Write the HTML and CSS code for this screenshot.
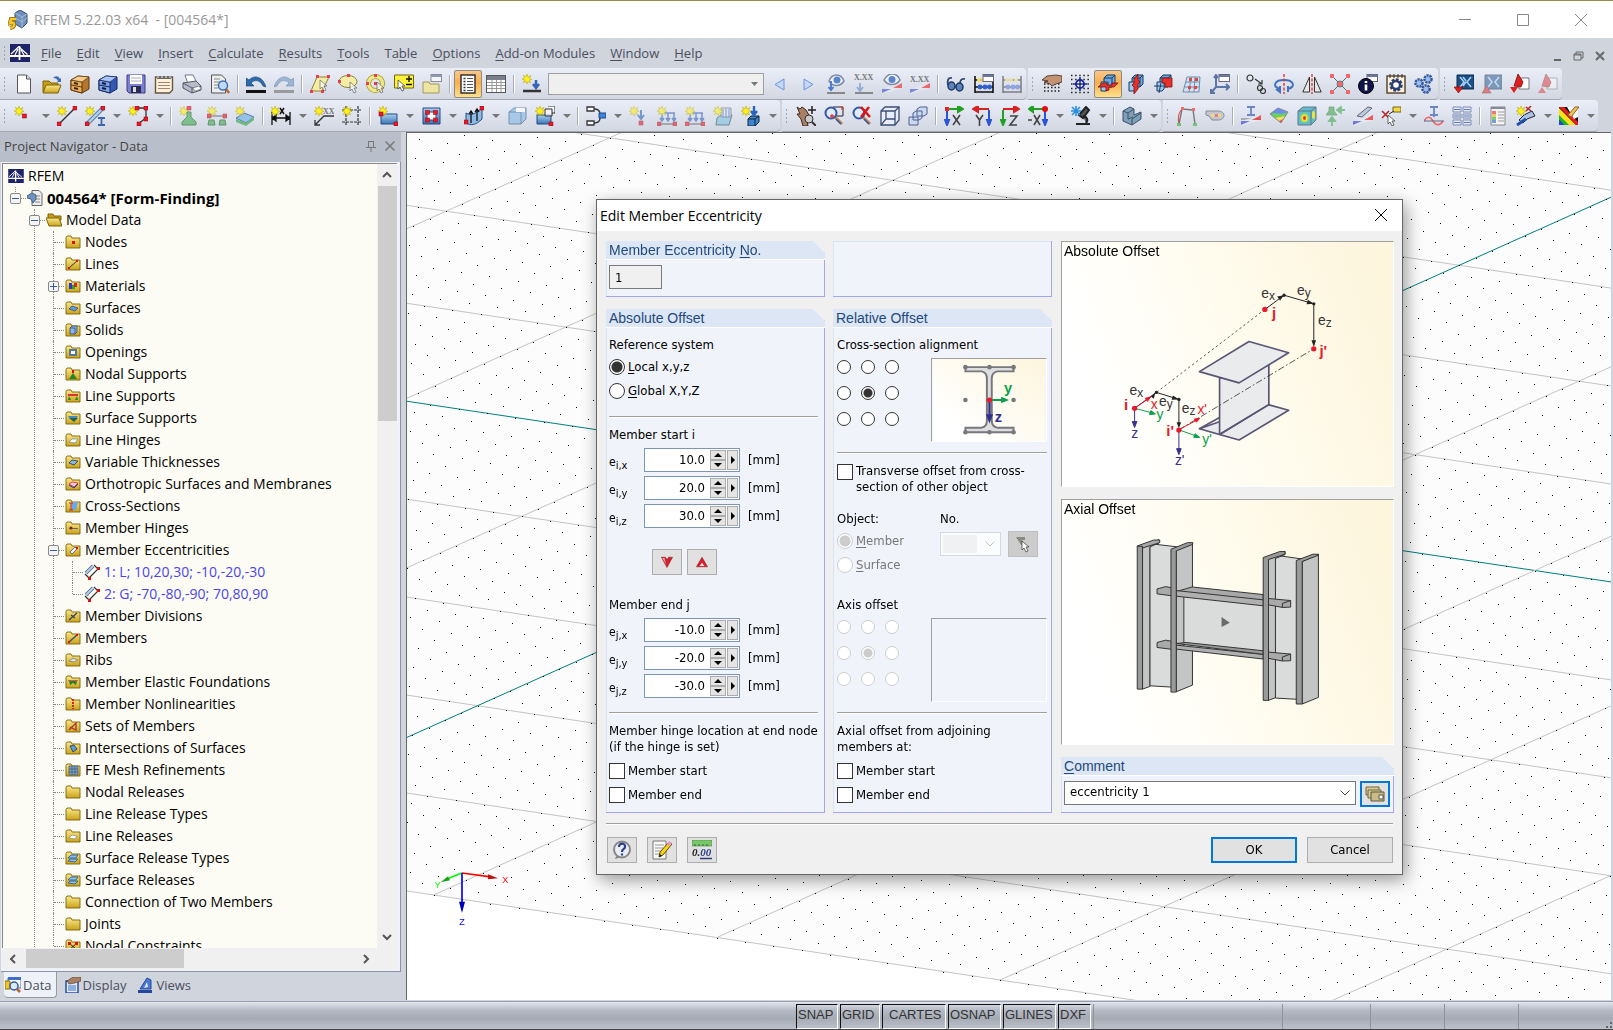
FILE: index.html
```html
<!DOCTYPE html>
<html lang="en">

<head>
    <meta charset="UTF-8">
    <meta name="viewport" content="width=device-width, initial-scale=1.0">
    <title>RFEM 5.22.03 x64 - [004564*]</title>
    <link rel="stylesheet" href="styles.css">
</head>

<body>
    <!-- Icon sprite, every icon is drawn on a 20x20 grid -->
    <svg class="sprite" aria-hidden="true">
        <defs>
            <linearGradient id="gold" x1="0" y1="0" x2="0" y2="1"><stop offset="0" stop-color="#fbe98a"/><stop offset="1" stop-color="#c9a21c"/></linearGradient>
            <linearGradient id="blue" x1="0" y1="0" x2="0" y2="1"><stop offset="0" stop-color="#a8cdf0"/><stop offset="1" stop-color="#3c74b4"/></linearGradient>
            <linearGradient id="cream" x1="0" y1="1" x2="1" y2="0"><stop offset="0.2" stop-color="#fff"/><stop offset="1" stop-color="#fdf5dc"/></linearGradient>
            <g id="star"><path d="M5 0 6 3.2 9 1.4 7.3 4.2 10 5.3 7.3 6.3 8.6 9 5.8 7.5 5 10 4 7.3 1.2 8.8 2.7 6 0 5 2.7 3.9 1.4 1.2 4 2.8z" fill="#fff01e" stroke="#b3a200" stroke-width=".5"/></g>
            <g id="node"><rect width="4" height="4" fill="#e8192c" stroke="#900" stroke-width=".5"/></g>
            <g id="cursor"><path d="M0 0v9l2-2 2 4 2-1-2-4h3z" fill="#fff" stroke="#444" stroke-width=".8"/></g>
            <g id="lens"><path d="M11 11l7 7" stroke="#c08a50" stroke-width="3"/><path d="M12 13l5 5" stroke="#3555a5" stroke-width="1.500"/><circle cx="7" cy="7" r="5.500" fill="#dceeff" fill-opacity=".8" stroke="#3555a5" stroke-width="2"/></g>
            <g id="abacus"><path d="M1 2v17M19 2v17M1 6h18M1 13h18M1 18h18" stroke="#111" stroke-width="1.600"/><g fill="#f0dc60"><circle cx="5" cy="6" r="2"/><circle cx="9" cy="6" r="2"/><circle cx="14" cy="6" r="2"/></g><g fill="#2f5fd0"><circle cx="6" cy="13" r="2.400"/><circle cx="11" cy="13" r="2.400"/><circle cx="15.500" cy="13" r="2.400"/></g></g>
            <g id="tri"><path d="M0 20V15L20 9v5z" fill="#e9eaf2"/><path d="M0 19l9-4H0z" fill="#5161e0"/><path d="M11 14h9V9z" fill="#ee3a3a"/></g>
            <g id="cubes"><path d="M6 4l3-3h8v9l-3 3H6z" fill="#6fa9dc" stroke="#153a66"/><path d="M6 4h8v9M14 4l3-3" fill="none" stroke="#153a66"/><path d="M3 8h7v7l-2 2H3z" fill="#9fcaee" stroke="#153a66"/></g>
            <g id="win"><rect x="9" y=".5" width="10.500" height="7" fill="#fff" stroke="#667"/><path d="M9 1h10.500v2H9z" fill="#6878a0"/></g>
        </defs>
        <symbol id="i-logo" viewBox="0 0 20 18"><path fill="#1d2467" d="M0 0h20v18H0z"/><path d="M0 12h20M9.500 2v14" stroke="#fff" stroke-width="1.800"/><path d="M9 2.500L1 10M9.500 3.500l8 7M8 5L5 11M11 6l3 5" stroke="#fff" stroke-width="1.200" fill="none"/></symbol>
        <symbol id="i-app" viewBox="0 0 20 20"><path d="M7 3l5-3 7 4v9l-5 5-7-4z" fill="#6f90ba" stroke="#344e72"/><path d="M7 3l7 4v11M14 7l5-3M7 8l7 4 5-4" fill="none" stroke="#b9d0e8" stroke-width=".7"/><path d="M8 9H3l-1 4c5-2 6 4 0 5" fill="none" stroke="#7c6410" stroke-width="4"/><path d="M8 9H3l-1 4c5-2 6 4 0 5" fill="none" stroke="#f5c72a" stroke-width="2.600"/></symbol>
        <symbol id="i-new" viewBox="0 0 20 20"><path d="M3.500 1h9l4 4v14h-13z" fill="#fdfdfd" stroke="#555"/><path d="M12.500 1v4h4" fill="#ddd" stroke="#555"/></symbol>
        <symbol id="i-open" viewBox="0 0 20 20"><path d="M1 7h6l2 2h7v9H1z" fill="#c79d18" stroke="#7d6208"/><path d="M4 11h15l-3 8H1z" fill="url(#gold)" stroke="#7d6208"/><path d="M11 4c3-3 6-2 7 1l1-1v4h-4l1-1c-1-2-2-3-5-3z" fill="#3f6fb5"/></symbol>
        <symbol id="i-cab" viewBox="0 0 20 20"><path d="M1 6l7-4 11 1v12l-7 4-11-3z" fill="#b5762c" stroke="#5d3708"/><path d="M1 6l11 2v11L1 16z" fill="#eab061" stroke="#5d3708"/><path d="M1 6l7-4 11 1-7 5z" fill="#f6cd92" stroke="#5d3708" stroke-width=".7"/><path d="M1 11l11 2" stroke="#5d3708"/><path d="M4 9l4 1M4 14l4 1" stroke="#40280a" stroke-width="2"/></symbol>
        <symbol id="i-cabb" viewBox="0 0 20 20"><path d="M1 6l7-4 11 1v12l-7 4-11-3z" fill="#3258b4" stroke="#13275c"/><path d="M1 6l11 2v11L1 16z" fill="#7fa3ea" stroke="#13275c"/><path d="M1 6l7-4 11 1-7 5z" fill="#aac4f8" stroke="#13275c" stroke-width=".7"/><path d="M1 11l11 2" stroke="#13275c"/><path d="M4 9l4 1M4 14l4 1" stroke="#0f1c40" stroke-width="2"/></symbol>
        <symbol id="i-save" viewBox="0 0 20 20"><path d="M1 1h18v18H3l-2-2z" fill="#7d7fd0" stroke="#3c3d80"/><path d="M4 1h12v9H4z" fill="#fff"/><path d="M5 4h10M5 7h10" stroke="#aab"/><path d="M5 12h10v7H5z" fill="#2a2b50"/><path d="M7 13h3v5H7z" fill="#ddd"/></symbol>
        <symbol id="i-clip" viewBox="0 0 20 20"><path d="M1.500 3h17v13l-3 3h-14z" fill="#fdf0dc" stroke="#6b543a" stroke-width="1.400"/><path d="M3 2h14v3H3z" fill="#6d6a66"/><path d="M4 0v4M8 0v4M12 0v4M16 0v4" stroke="#eee"/><path d="M4 8.500h12M4 11.500h12M4 14.500h12" stroke="#a4876a" stroke-width="1.200"/></symbol>
        <symbol id="i-print" viewBox="0 0 20 20"><path d="M3 1h8l4 8-9 1z" fill="#fff" stroke="#778"/><path d="M1 9l13-2 5 5v4l-9 3-9-5z" fill="#b9bccb" stroke="#556"/><path d="M1 9l9 5 9-2M10 14v5" fill="none" stroke="#556"/><path d="M11 14l6-2 2 3-6 2z" fill="#fff" stroke="#778" stroke-width=".6"/></symbol>
        <symbol id="i-preview" viewBox="0 0 20 20"><path d="M1.500 1h10l4 4v14h-14z" fill="#eee" stroke="#555"/><path d="M4 5h6M4 8h9M4 11h6M4 14h4" stroke="#888"/><path d="M16 15l3 4" stroke="#b7672e" stroke-width="2.500"/><circle cx="13" cy="11.500" r="4.500" fill="#bedcf6" stroke="#4070b8" stroke-width="1.500"/></symbol>
        <symbol id="i-undo" viewBox="0 0 20 20"><path d="M0 4v8h8L5 9c4-4 9-3 12 3l3 1C17 3 9 0 3 6z" fill="#2d69ad" stroke="#123a66" stroke-width=".6"/><path d="M0 17.500h20" stroke="#111" stroke-width="3"/></symbol>
        <symbol id="i-redo" viewBox="0 0 20 20"><path d="M20 4v8h-8l3-3c-4-4-9-3-12 3l-3 1C3 3 11 0 17 6z" fill="#9bb5d2" stroke="#7b8ea6" stroke-width=".6"/><path d="M0 17.500h20" stroke="#999" stroke-width="3"/></symbol>
        <symbol id="i-selpar" viewBox="0 0 20 20"><path d="M7 3h12l-7 14H1z" fill="#f3eda6" stroke="#8d8033"/><g fill="#e8404a"><path d="M6 1h3v3H6zM17 1h3v3h-3zM0 16h3v3H0zM11 16h3v3h-3z"/></g><use href="#cursor" x="10" y="6" opacity=".7"/></symbol>
        <symbol id="i-seloval" viewBox="0 0 20 20"><ellipse cx="10" cy="7.500" rx="9" ry="6" fill="#f3eda6" stroke="#8d8033"/><path d="M9 0h3v3H9zM0 6h3v3H0z" fill="#e8404a"/><use href="#cursor" x="12" y="8" opacity=".7"/></symbol>
        <symbol id="i-selring" viewBox="0 0 20 20"><circle cx="9.500" cy="9.500" r="7" fill="none" stroke="#a3992f" stroke-width="5"/><circle cx="9.500" cy="9.500" r="7" fill="none" stroke="#efe886" stroke-width="3.400"/><path d="M8 0h3v3H8zM0 8h3v3H0zM8 8h3v3H8z" fill="#e8404a"/><use href="#cursor" x="11" y="8" opacity=".7"/></symbol>
        <symbol id="i-selbox" viewBox="0 0 20 20"><path d="M.500 1h19v13H.500z" fill="#fdf13c" stroke="#6f6710"/><path d="M12 5h6M15 2v6M12 10.500h6" stroke="#111" stroke-width="1.400"/><use href="#cursor" x="4" y="6"/></symbol>
        <symbol id="i-selwin" viewBox="0 0 20 20"><path d="M1 8h6l1 2h9v9H1z" fill="#ece5a3" stroke="#a39a5a"/><use href="#win" opacity=".7"/></symbol>
        <symbol id="i-list" viewBox="0 0 20 20"><rect x="3" y="1" width="14" height="18" fill="#fff" stroke="#333" stroke-width="1.500"/><path d="M5.500 4.500h2M5.500 7.500h2M5.500 10.500h2M5.500 13.500h2M5.500 16.500h2" stroke="#333" stroke-width="1.600"/><path d="M9 4.500h6M9 7.500h6M9 10.500h6M9 13.500h6M9 16.500h6" stroke="#555"/></symbol>
        <symbol id="i-table" viewBox="0 0 20 20"><rect x=".500" y="1.500" width="19" height="17" fill="#fff" stroke="#555"/><path d="M1 2h18v4H1z" fill="#7a8090"/><path d="M1 8.500h18M1 11.500h18M1 14.500h18M6 6v12M10.500 6v12M15 6v12" stroke="#999"/></symbol>
        <symbol id="i-load" viewBox="0 0 20 20"><use href="#star"/><path d="M14 6v7M11 10l3 4 3-4" fill="none" stroke="#3565b8" stroke-width="2.500"/><path d="M1 17h18" stroke="#333" stroke-width="2.500"/></symbol>
        <symbol id="i-prev" viewBox="0 0 20 20"><path d="M14 5v11L5 10.500z" fill="#c4d8f6" stroke="#6c93dd"/></symbol>
        <symbol id="i-next" viewBox="0 0 20 20"><path d="M6 5v11l9-5.500z" fill="#c4d8f6" stroke="#6c93dd"/></symbol>
        <symbol id="i-eyeload" viewBox="0 0 20 20"><path d="M3 7c3-8 12-8 15 0-4 6-11 6-15 0z" fill="#eef3fb" stroke="#7c8aa4" stroke-width="1.500"/><circle cx="11" cy="6" r="3.500" fill="#5a85c8"/><path d="M5 7v9M2.500 13l2.500 3 2.500-3" stroke="#4a78c8" stroke-width="1.800" fill="none"/><path d="M1 19h18" stroke="#888" stroke-width="2"/></symbol>
        <symbol id="i-xxload" viewBox="0 0 20 20"><text x="0" y="6" class="ico-txt">X.XX</text><path d="M6 9v7M3 13l3 4 3-4" stroke="#8fa8d4" stroke-width="1.800" fill="none"/><path d="M1 19h18" stroke="#888" stroke-width="2"/></symbol>
        <symbol id="i-eyeres" viewBox="0 0 20 20"><path d="M2 6c4-8 13-8 16 0-4 6-12 6-16 0z" fill="#eef3fb" stroke="#7c8aa4" stroke-width="1.500"/><circle cx="10" cy="5.500" r="3.500" fill="#5a85c8"/><use href="#tri" opacity=".7"/></symbol>
        <symbol id="i-xxres" viewBox="0 0 20 20"><text x="0" y="8" class="ico-txt">X.XX</text><use href="#tri" opacity=".7"/></symbol>
        <symbol id="i-glasses" viewBox="0 0 20 20"><path d="M6 4C2 3 1 7 2 11M19 5c-4-1-5 2-5 5M8 12l3 1" fill="none" stroke="#2d456e" stroke-width="1.800"/><ellipse cx="5.500" cy="12" rx="3.500" ry="4" fill="#5b83c3" stroke="#23395f" stroke-width="1.500"/><ellipse cx="13.500" cy="13" rx="3.500" ry="4" fill="#5b83c3" stroke="#23395f" stroke-width="1.500"/></symbol>
        <symbol id="i-calcwin" viewBox="0 0 20 20"><use href="#abacus"/><use href="#win"/></symbol>
        <symbol id="i-calc" viewBox="0 0 20 20"><use href="#abacus" opacity=".45"/></symbol>
        <symbol id="i-handgrid" viewBox="0 0 20 20"><path d="M2 10h17M2 13.500h17M2 17h17" stroke="#222" stroke-width="1.500" stroke-dasharray="1.500 2"/><path d="M0 6l5-4 9-1 6 1v6l-6 2-4 2-2-2-3-1-3-1 4-1z" fill="#c29373" stroke="#3e2718" stroke-width=".8"/></symbol>
        <symbol id="i-snap" viewBox="0 0 20 20"><path d="M1 1.500h18M1 5.500h18M1 14.500h18M1 18.500h18M1 10h18" stroke="#222" stroke-width="1.500" stroke-dasharray="1.500 2.600"/><circle cx="10" cy="10" r="4" fill="#fff" stroke="#1a2690" stroke-width="1.800"/><path d="M10 3v14M3 10h14" stroke="#1a2690" stroke-width="1.500"/></symbol>
        <symbol id="i-pl1" viewBox="0 0 20 20"><use href="#cubes"/><path d="M0 13l5-4h4v2h5V9h6l-4 4h-5v3l-3 1v-4z" fill="#e8302c" stroke="#711" stroke-width=".8"/></symbol>
        <symbol id="i-pl2" viewBox="0 0 20 20"><use href="#cubes"/><path d="M8 5l4-5v6l2 2-2 2v5l-4 5v-7l-2-2 2-2z" fill="#e8302c" stroke="#711" stroke-width=".8"/></symbol>
        <symbol id="i-pl3" viewBox="0 0 20 20"><use href="#cubes"/><path d="M8 4h10v9h-7V9H8z" fill="#e8302c" stroke="#711" stroke-width=".8"/><path d="M0 12h9M7 9l-2 10" stroke="#153a66"/></symbol>
        <symbol id="i-plgrid" viewBox="0 0 20 20"><path d="M5 3h13l-1 15H1z" fill="#cfe4f6" stroke="#6e8cab"/><path d="M4 8h14M3 13h14M9 3L7 18M13 3l-1 15" stroke="#6e8cab"/><path d="M7 4h3v3H7zM13 4h3v3h-3zM6 12h3v3H6zM12 12h3v3h-3z" fill="#ea4040"/></symbol>
        <symbol id="i-ucs" viewBox="0 0 20 20"><path d="M6 1v12h13M6 13l-5 6M4 4l2-3 2 3M1 15v4h4M16 10l3 3-3 3" fill="none" stroke="#5b75a8" stroke-width="2"/><use href="#win"/></symbol>
        <symbol id="i-move" viewBox="0 0 20 20"><circle cx="4" cy="4" r="3" fill="none" stroke="#333" stroke-width="1.200"/><circle cx="14" cy="14" r="2.500" fill="none" stroke="#333" stroke-width="1.200"/><circle cx="17" cy="17" r="2.500" fill="none" stroke="#333" stroke-width="1.200"/><path d="M9 5l7 5M16 6v4h-4" fill="none" stroke="#333" stroke-width="1.200"/></symbol>
        <symbol id="i-rotate" viewBox="0 0 20 20"><path d="M6 15C-2 13 0 6 10 6s12 7 4 9M6 12v6l-4-3M14 12v6" fill="none" stroke="#3f73bd" stroke-width="2"/><path d="M10 0v20" stroke="#e33" stroke-width="1.400" stroke-dasharray="3 1.500"/></symbol>
        <symbol id="i-mirror" viewBox="0 0 20 20"><path d="M7.500 3v15H.800zM12.500 3v15h6.700z" fill="#e9e9e9" stroke="#333"/><path d="M10 0v20" stroke="#e33" stroke-width="1.400" stroke-dasharray="3 1.500"/></symbol>
        <symbol id="i-scale" viewBox="0 0 20 20"><path d="M2 2l16 16M18 2L2 18" stroke="#666"/><circle cx="10" cy="10" r="3" fill="none" stroke="#666"/><g fill="#ee6a6a"><path d="M0 0h4v4H0zM16 0h4v4h-4zM0 16h4v4H0zM16 16h4v4h-4zM8 8h4v4H8z"/></g></symbol>
        <symbol id="i-info" viewBox="0 0 20 20"><use href="#win"/><circle cx="8" cy="12" r="7.500" fill="#10144a" stroke="#000"/><path d="M8 10.500v6M8 7v2" stroke="#fff" stroke-width="2.600"/></symbol>
        <symbol id="i-gearclip" viewBox="0 0 20 20"><rect x="1" y="2" width="18" height="17" fill="#fbf0dc" stroke="#5b4a33" stroke-width="1.500"/><path d="M4 0v4M8 0v4M12 0v4M16 0v4" stroke="#333"/><circle cx="10" cy="11" r="5" fill="none" stroke="#2a4070" stroke-width="3.500" stroke-dasharray="2.500 1.300"/><circle cx="10" cy="11" r="4" fill="#fff" stroke="#2a4070" stroke-width="2.400"/></symbol>
        <symbol id="i-gears" viewBox="0 0 20 20"><g fill="#9fbdea" stroke="#33569c" stroke-width="2.400" stroke-dasharray="2.200 .8"><circle cx="14" cy="5" r="3.600"/><circle cx="5" cy="9" r="3.600"/><circle cx="12" cy="15" r="3.600"/></g></symbol>
        <symbol id="i-mod" viewBox="0 0 20 20"><path d="M3 1h17v14H3z" fill="#1d4f86" stroke="#0c2b50"/><path d="M6 3l4 5-4 5M17 3l-4 5 4 5M9 3l3 4M9 12l3-4" stroke="#a9d3f4" stroke-width="1.500" fill="none"/><path d="M0 13h9l-4.500 6z" fill="#e01e1e" stroke="#7a0000" stroke-width=".6"/></symbol>
        <symbol id="i-modup" viewBox="0 0 20 20"><g opacity=".5"><path d="M3 1h17v14H3z" fill="#1d4f86" stroke="#0c2b50"/><path d="M6 3l4 5-4 5M17 3l-4 5 4 5" stroke="#a9d3f4" stroke-width="1.500" fill="none"/><path d="M0 19h9l-4.500-7z" fill="#e01e1e" stroke="#7a0000" stroke-width=".6"/></g></symbol>
        <symbol id="i-exp" viewBox="0 0 20 20"><path d="M9 4h10v11H9z" fill="#fff" stroke="#777"/><path d="M8 0l5 8-2 5-7-1z" fill="#e01e1e" stroke="#6a0000" stroke-width=".7"/><path d="M0 13h8l-4 6z" fill="#e01e1e"/></symbol>
        <symbol id="i-expup" viewBox="0 0 20 20"><g opacity=".45"><path d="M9 4h10v11H9z" fill="#fff" stroke="#777"/><path d="M8 0l5 8-2 5-7-1z" fill="#e01e1e" stroke="#6a0000" stroke-width=".7"/><path d="M0 19h8l-4-6z" fill="#e01e1e"/></g></symbol>

        <symbol id="i-nnode" viewBox="0 0 20 20"><use href="#star"/><use href="#node" x="8.500" y="8"/></symbol>
        <symbol id="i-nline" viewBox="0 0 20 20"><path d="M2 18L18 2" stroke="#333" stroke-width="1.400"/><use href="#star"/><use href="#node" x="16" y="0"/><use href="#node" x="0" y="16"/></symbol>
        <symbol id="i-nmember" viewBox="0 0 20 20"><path d="M2 18L18 2" stroke="#46648c" stroke-width="4"/><path d="M2 18L18 2" stroke="#a9cdee" stroke-width="2.500"/><use href="#star"/><use href="#node" x="16" y="0"/><use href="#node" x="0" y="16"/><path d="M13 12h7M13 19h7M16.500 12v7" stroke="#3a65b0" stroke-width="1.800"/></symbol>
        <symbol id="i-npoly" viewBox="0 0 20 20"><path d="M8 2h10v10l-8 6" fill="none" stroke="#333" stroke-width="1.300"/><use href="#star"/><use href="#node" x="7" y="0"/><use href="#node" x="16" y="0"/><use href="#node" x="16" y="11"/><use href="#node" x="9" y="16"/></symbol>
        <symbol id="i-nsup" viewBox="0 0 20 20"><g opacity=".65"><use href="#star"/><use href="#node" x="8" y="0"/><path d="M8 6h4v5l5 5v3H3v-3l5-5z" fill="#4fae5c" stroke="#21702e"/></g></symbol>
        <symbol id="i-lsup" viewBox="0 0 20 20"><g opacity=".65"><path d="M2 10h16" stroke="#333"/><use href="#star"/><use href="#node" x="0" y="8"/><use href="#node" x="16" y="8"/><path d="M2 14h5l1 5H1zM13 14h5l1 5h-7z" fill="#4fae5c" stroke="#21702e"/></g></symbol>
        <symbol id="i-ssup" viewBox="0 0 20 20"><g opacity=".75"><path d="M1 12l8-5 10 4-8 6z" fill="#7db8e8" stroke="#2a5d90"/><path d="M1 13v3l10 4 8-6v-3l-8 6z" fill="#4fae5c"/><use href="#star"/></g></symbol>
        <symbol id="i-dim" viewBox="0 0 20 20"><path d="M1 6v13M19 6v13M2 12h16M5 9l-4 3 4 3zM15 9l4 3-4 3z" stroke="#111" fill="#111" stroke-width="1.300"/><path d="M9 2l4 6M13 2L9 8" stroke="#111" stroke-width="1.500"/><use href="#star" x="-1"/></symbol>
        <symbol id="i-cmt" viewBox="0 0 20 20"><path d="M1 19l9-9h10M1 14v5h5" fill="none" stroke="#333" stroke-width="1.300"/><text x="9" y="8" class="ico-txt">XX</text><use href="#star"/></symbol>
        <symbol id="i-guide" viewBox="0 0 20 20"><path d="M4 0v20M16 0v20M0 4h20M0 16h20" stroke="#333" stroke-width="1.200" stroke-dasharray="3 1"/><use href="#star"/></symbol>
        <symbol id="i-nsurf" viewBox="0 0 20 20"><path d="M3 8h16v10H3z" fill="url(#blue)" stroke="#204d80"/><use href="#star"/><use href="#node" x="1" y="6"/><use href="#node" x="16" y="16"/></symbol>
        <symbol id="i-nopen" viewBox="0 0 20 20"><path d="M2 2h17v16H2z" fill="url(#blue)" stroke="#204d80"/><path d="M6 6h9v8H6z" fill="#fff" stroke="#204d80"/><use href="#node" x="4.500" y="4.500"/><use href="#node" x="12.500" y="4.500"/><use href="#node" x="4.500" y="12"/><use href="#node" x="12.500" y="12"/></symbol>
        <symbol id="i-curved" viewBox="0 0 20 20"><path d="M2 7c5 3 9 1 16-5v11c-6 6-11 7-16 4z" fill="#8dbbe6" stroke="#204d80"/><path d="M7 6v11M5 8l2-3 2 3M13 3v12M11 6l2-3 2 3" stroke="#111" fill="none" stroke-width="1.300"/><use href="#node" x="0" y="14"/><use href="#node" x="16" y="0"/></symbol>
        <symbol id="i-solid" viewBox="0 0 20 20"><g opacity=".65"><path d="M2 6l5-4h12v11l-5 5H2z" fill="#8dbbe6" stroke="#3d668f"/><path d="M2 6h12v12M14 6l5-4" fill="none" stroke="#3d668f"/><path d="M9 2h9v4H9z" fill="#fff"/></g></symbol>
        <symbol id="i-extr" viewBox="0 0 20 20"><path d="M2 9h14v9H2z" fill="url(#blue)" stroke="#204d80"/><path d="M10 3h7v7h-7zM13 0h7v7h-3" fill="#fff" fill-opacity=".6" stroke="#333"/><use href="#star"/><use href="#node" x="14" y="16"/></symbol>
        <symbol id="i-conn" viewBox="0 0 20 20"><path d="M1 1h7v4H1zM1 15h7v4H1z" fill="#fff" stroke="#333" stroke-width="1.300"/><path d="M8 3c5 0 6 2 6 5M8 17c5 0 6-2 6-5" fill="none" stroke="#333" stroke-width="1.400"/><path d="M13 7h7v5h-7z" fill="#3d83dc" stroke="#1c4b8c"/></symbol>
        <symbol id="i-nload" viewBox="0 0 20 20"><g opacity=".6"><use href="#star"/><path d="M12 4v8M9 9l3 4 3-4" stroke="#3565b8" stroke-width="2" fill="none"/><use href="#node" x="10" y="15"/></g></symbol>
        <symbol id="i-mload" viewBox="0 0 20 20"><g opacity=".6"><path d="M3 7h15M5 7v8M11 7v8M17 7v8M3 12l2 3 2-3M9 12l2 3 2-3M15 12l2 3 2-3" stroke="#3565b8" stroke-width="1.500" fill="none"/><path d="M2 18h16" stroke="#333"/><use href="#star"/><use href="#node" x="0" y="16"/><use href="#node" x="16" y="16"/></g></symbol>
        <symbol id="i-sload" viewBox="0 0 20 20"><g opacity=".6"><path d="M4 12l4-3h11l-3 10H3z" fill="#7cc4dc" stroke="#356"/><path d="M8 2h10v9H8z" fill="#dde7f8" stroke="#667"/><path d="M10 3v8M13 3v8M16 3v8" stroke="#3565b8"/><use href="#star"/></g></symbol>
        <symbol id="i-soload" viewBox="0 0 20 20"><path d="M7 13l3-3h8v6l-4 4H7z" fill="#3e86cf" stroke="#123"/><path d="M7 13h7v7M14 13l4-3" fill="none" stroke="#123"/><path d="M13 0v7M10 5l3 4 3-4" stroke="#2a62c0" stroke-width="2.400" fill="none"/><use href="#star"/></symbol>
        <symbol id="i-pan" viewBox="0 0 20 20"><path d="M1 1l3 2 2-2 4 3 3 5-2 6 1 5H7l-2-7-4-5 3 0z" fill="#a98064" stroke="#3e291b"/><path d="M16 0v8M12 4h8" stroke="#222" stroke-width="1.500"/><circle cx="13" cy="13" r="4" fill="#ccc" stroke="#333"/><path d="M16 16l4 4" stroke="#333" stroke-width="2"/></symbol>
        <symbol id="i-zwin" viewBox="0 0 20 20"><path d="M9 1h10v9h-8" fill="none" stroke="#222"/><use href="#lens"/><path d="M18 0v4M8 8v4M6 10h4" stroke="#e33" stroke-width="1.300"/></symbol>
        <symbol id="i-zx" viewBox="0 0 20 20"><use href="#lens"/><path d="M9 1l9 10M17 1L9 11" stroke="#d81818" stroke-width="2.600"/></symbol>
        <symbol id="i-cube" viewBox="0 0 20 20"><path d="M1 5l4-4h14v13l-4 5H1z" fill="#e9eefb" stroke="#3d4f74" stroke-width="1.300"/><path d="M1 5h14v14M15 5l4-4M1 19l5-6V5M6 13h9" fill="none" stroke="#3d4f74" stroke-width="1.300"/></symbol>
        <symbol id="i-cubes" viewBox="0 0 20 20"><path d="M9 3l3-2h7v7l-3 2H9zM5 7l3-2h6v7l-3 2H5zM1 11h9v8H1z" fill="#cdd9f2" stroke="#4d628f"/></symbol>
        <symbol id="i-vx" viewBox="0 0 20 20"><path d="M3 3h12M14 0l5 3-5 3z" stroke="#22a022" fill="#22a022" stroke-width="2"/><path d="M3 4v12M1 14l2 5 2-5z" stroke="#2a55d8" fill="#2a55d8" stroke-width="2"/><path d="M1 1h4v4H1z" fill="#e22"/><path d="M9 9l7 10M16 9L9 19" stroke="#444" stroke-width="1.600"/></symbol>
        <symbol id="i-vy" viewBox="0 0 20 20"><path d="M17 3H5M6 0L1 3l5 3z" stroke="#d82222" fill="#d82222" stroke-width="2"/><path d="M17 4v12M15 14l2 5 2-5z" stroke="#2a55d8" fill="#2a55d8" stroke-width="2"/><path d="M4 9l3.500 5L11 9M7.500 14v6" stroke="#444" stroke-width="1.600" fill="none"/></symbol>
        <symbol id="i-vz" viewBox="0 0 20 20"><path d="M3 3h12M14 0l5 3-5 3z" stroke="#d82222" fill="#d82222" stroke-width="2"/><path d="M3 4v12M1 14l2 5 2-5z" stroke="#22a022" fill="#22a022" stroke-width="2"/><path d="M10 10h7l-7 9h7" stroke="#444" stroke-width="1.600" fill="none"/></symbol>
        <symbol id="i-vmx" viewBox="0 0 20 20"><path d="M15 3H5M5 0L1 3l4 3z" stroke="#22a022" fill="#22a022" stroke-width="2"/><path d="M17 4v12M15 14l2 5 2-5z" stroke="#2a55d8" fill="#2a55d8" stroke-width="2"/><circle cx="17" cy="3" r="3" fill="#d11"/><path d="M0 14h4M6 9l6 10M12 9L6 19" stroke="#444" stroke-width="1.600"/></symbol>
        <symbol id="i-micro" viewBox="0 0 20 20"><path d="M8 9l7-8 3 3-6 8zM12 10c5 1 5 5 3 7M5 18h14" stroke="#222" stroke-width="2" fill="#555"/><path d="M1 1l8 8M9 1L1 9M5 0v10M0 5h10" stroke="#2b90e0" stroke-width="1.600"/></symbol>
        <symbol id="i-lsolid" viewBox="0 0 20 20"><path d="M1 5l7-4 4 2v6l7-3v7l-9 6-9-4z" fill="#7f9fb9" stroke="#3a5166"/><path d="M1 5l5 2v6l5-2M6 7l6-4M10 19v-6l9-6" fill="none" stroke="#3a5166"/></symbol>
        <symbol id="i-frame" viewBox="0 0 20 20"><path d="M2 18L5 3l11 1 2 14" fill="none" stroke="#777" stroke-width="1.400"/><path d="M2 18C0 10 3 5 5 3" fill="none" stroke="#e33"/><path d="M4 1h3v3H4zM15 2h3v3h-3z" fill="#f06a6a"/><path d="M0 17h4v3H0zM16 17h4v3h-4z" fill="#6fc47a"/></symbol>
        <symbol id="i-cap" viewBox="0 0 20 20"><g opacity=".7"><path d="M1 5h12c8 0 8 9 0 9H7L4 10 1 9z" fill="#b9bcc4" stroke="#666"/><path d="M6 8h3v3H6zM13 8h3v3h-3z" fill="#f6d850"/><path d="M10 8h3v3h-3z" fill="#e55"/></g></symbol>
        <symbol id="i-iforce" viewBox="0 0 20 20"><path d="M6 1h8M6 9h8M10 1v8" stroke="#6b86c8" stroke-width="1.800"/><path d="M0 13h20" stroke="#777"/><use href="#tri" opacity=".8"/></symbol>
        <symbol id="i-surf" viewBox="0 0 20 20"><path d="M1 8l8-6 10 4-7 11z" fill="#6ad05e"/><path d="M1 8l8-6 10 4-6 2-8-1z" fill="#6a8ff0"/><path d="M6 12l10-2-3 6-1 1z" fill="#f5e05a"/><path d="M10 15l4-2-2 4z" fill="#e55"/><path d="M1 8l8-6 10 4-7 11z" fill="none" stroke="#889"/></symbol>
        <symbol id="i-solres" viewBox="0 0 20 20"><path d="M1 5l5-4h13v13l-5 5H1z" fill="#5fbccd" stroke="#678"/><path d="M1 5h13v14M14 5l5-4" fill="none" stroke="#678"/><ellipse cx="7.500" cy="12" rx="4.500" ry="5" fill="#8cdc6a"/><ellipse cx="7.500" cy="12" rx="3" ry="3.500" fill="#f5e23a"/><ellipse cx="7.500" cy="12" rx="1.500" ry="2" fill="#e33"/><ellipse cx="16.500" cy="9" rx="1.500" ry="4" fill="#f5e23a"/></symbol>
        <symbol id="i-react" viewBox="0 0 20 20"><g opacity=".65"><path d="M4 1h5v4l3 4H1l3-4z" fill="#4fae5c" stroke="#21702e" stroke-width=".6"/><path d="M20 4h-5M16 1l-4 3 4 3zM7 20v-5M4 15l3-4 3 4z" stroke="#4fae5c" fill="#4fae5c" stroke-width="1.800"/></g></symbol>
        <symbol id="i-stress" viewBox="0 0 20 20"><path d="M4 10l11-9 4 1-10 9z" fill="#b9cbe0" stroke="#667"/><use href="#tri" opacity=".8"/></symbol>
        <symbol id="i-resval" viewBox="0 0 20 20"><path d="M12 1h8v5h-8z" fill="#f4d94a" stroke="#776610"/><path d="M1 5l7 7M8 5l-7 7" stroke="#b22" stroke-width="1.500"/><path d="M8 8l5-3" stroke="#333"/><use href="#cursor" x="7" y="9"/></symbol>
        <symbol id="i-section" viewBox="0 0 20 20"><path d="M6 1h8M6 9h8M10 1v10" stroke="#6b86c8" stroke-width="1.800"/><path d="M0 15c3-5 6-5 9 0s7 5 10 0" fill="none" stroke="#e66" stroke-width="1.500"/><path d="M0 15h20" stroke="#668"/></symbol>
        <symbol id="i-resgrid" viewBox="0 0 20 20"><g fill="#e6ebf7" stroke="#7d8bb0"><path d="M1 1h8v5H1zM11 1h8v5h-8zM1 8h8v4H1zM11 8h8v4h-8zM1 14h8v5H1zM11 14h8v5h-8z"/></g><path d="M2 3.500h6M12 3.500h6M2 10h6M12 10h6M2 16.500h6M12 16.500h6" stroke="#5a78c0"/></symbol>
        <symbol id="i-panel" viewBox="0 0 20 20"><path d="M3 1h14v18H3z" fill="#f5f5f5" stroke="#888"/><path d="M3 1h14v2H3z" fill="#889"/><path d="M4 5h4v3H4z" fill="#e77"/><path d="M4 8h4v3H4z" fill="#ec6"/><path d="M4 11h4v3H4z" fill="#7c7"/><path d="M4 14h4v3H4z" fill="#79d"/><path d="M10 6h6M10 9h6M10 12h6M10 15h6" stroke="#999"/></symbol>
        <symbol id="i-knife" viewBox="0 0 20 20"><path d="M3 14l5-5 8-4 3 5-8 3-4 4z" fill="#aac4e6" stroke="#223"/><path d="M1 19l9-6" stroke="#1f4fae" stroke-width="3"/><path d="M10 1l5 4M15 0l-5 5" stroke="#b22" stroke-width="1.500"/><use href="#star"/></symbol>
        <symbol id="i-color" viewBox="0 0 20 20"><path d="M0 1h19v18H0z" fill="#111"/><path d="M0 2l17 17H9L0 10z" fill="#ffe11a"/><path d="M0 1h5l14 15v3h-2z" fill="#e02020"/><path d="M0 9l10 10H5L0 14z" fill="#19b32d"/><path d="M0 14l5 5H0z" fill="#2448d8"/><path d="M8 1h11v10l-4 2z" fill="#fff"/><path d="M20 1l-8 10-3-2 7-8z" fill="#e9c65a" stroke="#975b1e"/></symbol>

        <symbol id="i-folder" viewBox="0 0 16 14"><path d="M1 2.500l1-1.500h4l1 2h8v10H1z" fill="url(#gold)" stroke="#7d6208" stroke-width=".9"/></symbol>
        <symbol id="i-fopen" viewBox="0 0 16 14"><path d="M2 1h5l1 2h7v4H2z" fill="#c79d18" stroke="#7d6208"/><path d="M0 5h13l3 8H3z" fill="url(#gold)" stroke="#7d6208"/></symbol>
        <symbol id="i-doc" viewBox="0 0 16 16"><path d="M5 .500h7l3 3v12H5z" fill="#eee" stroke="#666"/><path d="M9 6h4M9 9h4M8 12h5" stroke="#888"/><path d="M0 6l5-3 4 2v4l-3 4-2-4-4-1z" fill="#6f93c0" stroke="#41618a"/></symbol>
        <symbol id="i-ecc" viewBox="0 0 16 16"><path d="M2 9l7-7" stroke="#4a6488" stroke-width="3.600"/><path d="M2 9l7-7" stroke="#b7d0ea" stroke-width="2"/><path d="M1 10l4 4M10 1l4 4-9 9" fill="none" stroke="#333" stroke-width="1.200"/><path d="M13 3h3v3h-3zM4 13h3v3H4z" fill="#d11"/></symbol>
    </svg>

    <header class="titlebar">
        <svg class="app-icon"><use href="#i-app"/></svg>
        <h1>RFEM 5.22.03 x64 &nbsp;- [004564*]</h1>
        <div class="win-buttons">
            <button aria-label="Minimize"><svg viewBox="0 0 12 12"><path d="M0 5.500h12"/></svg></button>
            <button aria-label="Maximize"><svg viewBox="0 0 12 12"><path d="M.500.500h11v11H.500z"/></svg></button>
            <button aria-label="Close"><svg viewBox="0 0 12 12"><path d="M0 0l12 12M12 0L0 12"/></svg></button>
        </div>
    </header>

    <nav class="menubar">
        <span class="grip"></span>
        <svg class="menu-logo"><use href="#i-logo"/></svg>
        <button><u>F</u>ile</button>
        <button><u>E</u>dit</button>
        <button><u>V</u>iew</button>
        <button><u>I</u>nsert</button>
        <button><u>C</u>alculate</button>
        <button><u>R</u>esults</button>
        <button><u>T</u>ools</button>
        <button>Ta<u>b</u>le</button>
        <button><u>O</u>ptions</button>
        <button><u>A</u>dd-on Modules</button>
        <button><u>W</u>indow</button>
        <button><u>H</u>elp</button>
        <div class="mdi-buttons">
            <svg viewBox="0 0 12 12"><path d="M2 10h7" stroke-width="2"/></svg>
            <svg viewBox="0 0 12 12"><path d="M1 4h7v6H1zM1 5h7M3 4V2h7v6H8" stroke-width="1"/></svg>
            <svg viewBox="0 0 12 12"><path d="M2 2l8 8M10 2l-8 8" stroke-width="2"/></svg>
        </div>
    </nav>

    <div class="toolbars">
        <div class="toolbar-row">
            <div class="toolbar">
                <span class="grip"></span>
                <button class="tool" aria-label="New"><svg><use href="#i-new"/></svg></button>
                <button class="tool" aria-label="Open"><svg><use href="#i-open"/></svg></button>
                <button class="tool" aria-label="Project manager"><svg><use href="#i-cab"/></svg></button>
                <button class="tool" aria-label="Block manager"><svg><use href="#i-cabb"/></svg></button>
                <button class="tool" aria-label="Save"><svg><use href="#i-save"/></svg></button>
                <button class="tool" aria-label="Report"><svg><use href="#i-clip"/></svg></button>
                <button class="tool" aria-label="Print"><svg><use href="#i-print"/></svg></button>
                <button class="tool" aria-label="Preview"><svg><use href="#i-preview"/></svg></button>
                <span class="sep"></span>
                <button class="tool" aria-label="Undo"><svg><use href="#i-undo"/></svg></button>
                <button class="tool" aria-label="Redo"><svg><use href="#i-redo"/></svg></button>
                <span class="sep"></span>
                <button class="tool" aria-label="Select by rhomboid"><svg><use href="#i-selpar"/></svg></button>
                <button class="tool" aria-label="Select by ellipse"><svg><use href="#i-seloval"/></svg></button>
                <button class="tool" aria-label="Select by annulus"><svg><use href="#i-selring"/></svg></button>
                <button class="tool" aria-label="Add to selection"><svg><use href="#i-selbox"/></svg></button>
                <button class="tool" aria-label="Special selection"><svg><use href="#i-selwin"/></svg></button>
                <span class="sep"></span>
                <button class="tool active" aria-label="Navigator"><svg><use href="#i-list"/></svg></button>
                <button class="tool" aria-label="Tables"><svg><use href="#i-table"/></svg></button>
                <span class="sep"></span>
                <button class="tool" aria-label="New load case"><svg><use href="#i-load"/></svg></button>
                <select class="load-case" aria-label="Load case"><option></option></select>
                <button class="tool" aria-label="Previous"><svg><use href="#i-prev"/></svg></button>
                <button class="tool" aria-label="Next"><svg><use href="#i-next"/></svg></button>
                <button class="tool" aria-label="Show loads"><svg><use href="#i-eyeload"/></svg></button>
                <button class="tool" aria-label="Load values"><svg><use href="#i-xxload"/></svg></button>
                <button class="tool" aria-label="Show results"><svg><use href="#i-eyeres"/></svg></button>
                <button class="tool" aria-label="Result values"><svg><use href="#i-xxres"/></svg></button>
                <span class="sep"></span>
                <button class="tool" aria-label="View mode"><svg><use href="#i-glasses"/></svg></button>
                <button class="tool" aria-label="Calculation parameters"><svg><use href="#i-calcwin"/></svg></button>
                <button class="tool" aria-label="Calculate all"><svg><use href="#i-calc"/></svg></button>
            </div>
            <div class="toolbar">
                <span class="grip"></span>
                <button class="tool" aria-label="Work plane"><svg><use href="#i-handgrid"/></svg></button>
                <button class="tool" aria-label="Snap"><svg><use href="#i-snap"/></svg></button>
                <button class="tool active" aria-label="Plane XY"><svg><use href="#i-pl1"/></svg></button>
                <button class="tool" aria-label="Plane YZ"><svg><use href="#i-pl2"/></svg></button>
                <button class="tool" aria-label="Plane XZ"><svg><use href="#i-pl3"/></svg></button>
                <button class="tool" aria-label="Grid"><svg><use href="#i-plgrid"/></svg></button>
                <button class="tool" aria-label="Coordinate system"><svg><use href="#i-ucs"/></svg></button>
                <span class="sep"></span>
                <button class="tool" aria-label="Move"><svg><use href="#i-move"/></svg></button>
                <button class="tool" aria-label="Rotate"><svg><use href="#i-rotate"/></svg></button>
                <button class="tool" aria-label="Mirror"><svg><use href="#i-mirror"/></svg></button>
                <button class="tool" aria-label="Scale"><svg><use href="#i-scale"/></svg></button>
                <button class="tool" aria-label="Info"><svg><use href="#i-info"/></svg></button>
                <button class="tool" aria-label="Display properties"><svg><use href="#i-gearclip"/></svg></button>
                <button class="tool" aria-label="Settings"><svg><use href="#i-gears"/></svg></button>
            </div>
            <div class="toolbar">
                <span class="grip"></span>
                <button class="tool" aria-label="Import module"><svg><use href="#i-mod"/></svg></button>
                <button class="tool" aria-label="Export module"><svg><use href="#i-modup"/></svg></button>
                <button class="tool" aria-label="Import file"><svg><use href="#i-exp"/></svg></button>
                <button class="tool" aria-label="Export file"><svg><use href="#i-expup"/></svg></button>
            </div>
        </div>
        <div class="toolbar-row">
            <div class="toolbar">
                <span class="grip"></span>
                <button class="tool" aria-label="New node"><svg><use href="#i-nnode"/></svg></button><button class="drop" aria-label="More"></button>
                <button class="tool" aria-label="New line"><svg><use href="#i-nline"/></svg></button>
                <button class="tool" aria-label="New member"><svg><use href="#i-nmember"/></svg></button><button class="drop" aria-label="More"></button>
                <button class="tool" aria-label="New polyline"><svg><use href="#i-npoly"/></svg></button><button class="drop" aria-label="More"></button>
                <span class="sep"></span>
                <button class="tool" aria-label="Nodal support"><svg><use href="#i-nsup"/></svg></button>
                <button class="tool" aria-label="Line support"><svg><use href="#i-lsup"/></svg></button>
                <button class="tool" aria-label="Surface support"><svg><use href="#i-ssup"/></svg></button>
                <span class="sep"></span>
                <button class="tool" aria-label="Dimension"><svg><use href="#i-dim"/></svg></button><button class="drop" aria-label="More"></button>
                <button class="tool" aria-label="Comment"><svg><use href="#i-cmt"/></svg></button>
                <button class="tool" aria-label="Guideline"><svg><use href="#i-guide"/></svg></button>
                <span class="sep"></span>
                <button class="tool" aria-label="New surface"><svg><use href="#i-nsurf"/></svg></button><button class="drop" aria-label="More"></button>
                <button class="tool" aria-label="New opening"><svg><use href="#i-nopen"/></svg></button><button class="drop" aria-label="More"></button>
                <button class="tool" aria-label="Curved surface"><svg><use href="#i-curved"/></svg></button><button class="drop" aria-label="More"></button>
                <button class="tool" aria-label="New solid"><svg><use href="#i-solid"/></svg></button>
                <button class="tool" aria-label="Extrude"><svg><use href="#i-extr"/></svg></button><button class="drop" aria-label="More"></button>
                <span class="sep"></span>
                <button class="tool" aria-label="Connect"><svg><use href="#i-conn"/></svg></button><button class="drop" aria-label="More"></button>
                <button class="tool" aria-label="Nodal load"><svg><use href="#i-nload"/></svg></button>
                <button class="tool" aria-label="Member load"><svg><use href="#i-mload"/></svg></button>
                <button class="tool" aria-label="Line load"><svg><use href="#i-mload"/></svg></button>
                <button class="tool" aria-label="Surface load"><svg><use href="#i-sload"/></svg></button>
                <button class="tool" aria-label="Solid load"><svg><use href="#i-soload"/></svg></button><button class="drop" aria-label="More"></button>
            </div>
            <div class="toolbar">
                <span class="grip"></span>
                <button class="tool" aria-label="Pan"><svg><use href="#i-pan"/></svg></button>
                <button class="tool" aria-label="Zoom window"><svg><use href="#i-zwin"/></svg></button>
                <button class="tool" aria-label="Zoom all"><svg><use href="#i-zx"/></svg></button>
                <button class="tool" aria-label="Isometric view"><svg><use href="#i-cube"/></svg></button>
                <button class="tool" aria-label="Perspective view"><svg><use href="#i-cubes"/></svg></button>
                <span class="sep"></span>
                <button class="tool" aria-label="View in X"><svg><use href="#i-vx"/></svg></button>
                <button class="tool" aria-label="View in Y"><svg><use href="#i-vy"/></svg></button>
                <button class="tool" aria-label="View in Z"><svg><use href="#i-vz"/></svg></button>
                <button class="tool" aria-label="View in -X"><svg><use href="#i-vmx"/></svg></button><button class="drop" aria-label="More"></button>
                <button class="tool" aria-label="Visibility"><svg><use href="#i-micro"/></svg></button><button class="drop" aria-label="More"></button>
                <span class="sep"></span>
                <button class="tool" aria-label="Render"><svg><use href="#i-lsolid"/></svg></button><button class="drop" aria-label="More"></button>
            </div>
            <div class="toolbar">
                <span class="grip"></span>
                <button class="tool" aria-label="Deformation"><svg><use href="#i-frame"/></svg></button>
                <button class="tool" aria-label="Animation"><svg><use href="#i-cap"/></svg></button>
                <span class="sep"></span>
                <button class="tool" aria-label="Internal forces"><svg><use href="#i-iforce"/></svg></button>
                <button class="tool" aria-label="Surface results"><svg><use href="#i-surf"/></svg></button>
                <button class="tool" aria-label="Solid results"><svg><use href="#i-solres"/></svg></button>
                <button class="tool" aria-label="Reactions"><svg><use href="#i-react"/></svg></button>
                <button class="tool" aria-label="Stresses"><svg><use href="#i-stress"/></svg></button>
                <button class="tool" aria-label="Values"><svg><use href="#i-resval"/></svg></button><button class="drop" aria-label="More"></button>
                <button class="tool" aria-label="Result diagram"><svg><use href="#i-section"/></svg></button>
                <button class="tool" aria-label="Result windows"><svg><use href="#i-resgrid"/></svg></button>
                <span class="sep"></span>
                <button class="tool" aria-label="Panel"><svg><use href="#i-panel"/></svg></button>
                <button class="tool" aria-label="Section"><svg><use href="#i-knife"/></svg></button><button class="drop" aria-label="More"></button>
                <button class="tool" aria-label="Colors"><svg><use href="#i-color"/></svg></button><button class="drop" aria-label="More"></button>
            </div>
        </div>
    </div>

    <main class="main">
        <aside class="navigator">
            <div class="nav-header">
                <h2>Project Navigator - Data</h2>
                <svg viewBox="0 0 12 12"><path d="M3.500 1v6M8.500 1v6M3 1.500h6M1 7.500h10M6 8v4"/></svg>
                <svg viewBox="0 0 12 12"><path d="M1.500 1.500l9 9M10.500 1.500l-9 9" stroke-width="1.500"/></svg>
            </div>
            <div class="nav-frame">
                <div class="nav-view">
                    <div class="tree">
                        <div class="row"><svg><use href="#i-logo"/></svg>RFEM</div>
                        <ul>
                            <li><button class="toggle" aria-label="Collapse"></button>
                                <div class="row bold"><svg><use href="#i-doc"/></svg>004564* [Form-Finding]</div>
                                <ul>
                                    <li class="more"><button class="toggle" aria-label="Collapse"></button>
                                        <div class="row"><svg><use href="#i-fopen"/></svg>Model Data</div>
                                        <ul>
                                            <li><div class="row"><svg viewBox="0 0 16 14"><use href="#i-folder"/><path d="M7 6h3v3H7z" fill="#d11"/></svg>Nodes</div></li>
                                            <li><div class="row"><svg viewBox="0 0 16 14"><use href="#i-folder"/><path d="M4 11l8-7" stroke="#333"/><path d="M3 10h2v2H3zM11 3h2v2h-2z" fill="#d11"/></svg>Lines</div></li>
                                            <li><button class="toggle plus" aria-label="Expand"></button><div class="row"><svg viewBox="0 0 16 14"><use href="#i-folder"/><path d="M4 4h3v6H4z" fill="#33c"/><path d="M7 6h3v4H7z" fill="#2a2"/><path d="M9 4h3v4H9z" fill="#d22"/></svg>Materials</div></li>
                                            <li><div class="row"><svg viewBox="0 0 16 14"><use href="#i-folder"/><path d="M4 8l3-3 6 2-3 3z" fill="#5b9be0" stroke="#236" stroke-width=".6"/></svg>Surfaces</div></li>
                                            <li><div class="row"><svg viewBox="0 0 16 14"><use href="#i-folder"/><path d="M5 5l2-2h5v6l-2 2H5z" fill="#8ab8ea" stroke="#236" stroke-width=".7"/><path d="M5 5h5v6" fill="none" stroke="#236" stroke-width=".7"/></svg>Solids</div></li>
                                            <li><div class="row"><svg viewBox="0 0 16 14"><use href="#i-folder"/><path d="M5 5h6v5H5z" fill="#ffe" stroke="#579" stroke-width="2"/></svg>Openings</div></li>
                                            <li><div class="row"><svg viewBox="0 0 16 14"><use href="#i-folder"/><path d="M7 3h2v3H7z" fill="#d11"/><path d="M8 6l4 6H4z" fill="#282"/></svg>Nodal Supports</div></li>
                                            <li><div class="row"><svg viewBox="0 0 16 14"><use href="#i-folder"/><path d="M3 5h10v2H3z" fill="#d33"/><path d="M4 7l2 4H3zM12 7l1 4h-3z" fill="#282"/></svg>Line Supports</div></li>
                                            <li><div class="row"><svg viewBox="0 0 16 14"><use href="#i-folder"/><path d="M3 5h10l-2 3H5z" fill="#48c"/><path d="M4 7h9l-4 4z" fill="#264"/></svg>Surface Supports</div></li>
                                            <li><div class="row"><svg viewBox="0 0 16 14"><use href="#i-folder"/><path d="M4 9l3-3 6 0-3 4z" fill="#fff" stroke="#68a" stroke-width=".7"/></svg>Line Hinges</div></li>
                                            <li><div class="row"><svg viewBox="0 0 16 14"><use href="#i-folder"/><path d="M4 8l3-3 6 1-4 4z" fill="#8ab8ea" stroke="#123" stroke-width=".7"/></svg>Variable Thicknesses</div></li>
                                            <li><div class="row"><svg viewBox="0 0 16 14"><use href="#i-folder"/><path d="M4 7l3-2 6 1-4 4z" fill="#fcd" stroke="#d22" stroke-width=".8"/><path d="M4 8l5 3 4-4" fill="none" stroke="#23c"/></svg>Orthotropic Surfaces and Membranes</div></li>
                                            <li><div class="row"><svg viewBox="0 0 16 14"><use href="#i-folder"/><path d="M6 4l7-1-2 8H7z" fill="#67a9f0"/><path d="M4 4h4M4 11h4M6 4v7" stroke="#c22"/></svg>Cross-Sections</div></li>
                                            <li><div class="row"><svg viewBox="0 0 16 14"><use href="#i-folder"/><path d="M4 7.500h9" stroke="#666"/><circle cx="6" cy="7" r="1.600" fill="#822"/></svg>Member Hinges</div></li>
                                            <li><button class="toggle" aria-label="Collapse"></button><div class="row"><svg viewBox="0 0 16 14"><use href="#i-folder"/><path d="M5 9l5-5 2 2-5 5z" fill="#eef" stroke="#345" stroke-width=".7"/><path d="M11 4h2v2h-2z" fill="#d11"/></svg>Member Eccentricities</div>
                                                <ul class="items">
                                                    <li><div class="row"><svg><use href="#i-ecc"/></svg>1: L; 10,20,30; -10,-20,-30</div></li>
                                                    <li><div class="row"><svg><use href="#i-ecc"/></svg>2: G; -70,-80,-90; 70,80,90</div></li>
                                                </ul>
                                            </li>
                                            <li><div class="row"><svg viewBox="0 0 16 14"><use href="#i-folder"/><path d="M4 11l8-7M6 6l4 3" stroke="#345" stroke-width="1.300"/></svg>Member Divisions</div></li>
                                            <li><div class="row"><svg viewBox="0 0 16 14"><use href="#i-folder"/><path d="M4 11l8-7" stroke="#456" stroke-width="1.600"/><path d="M3 10h2v2H3zM11 3h2v2h-2z" fill="#d11"/></svg>Members</div></li>
                                            <li><div class="row"><svg viewBox="0 0 16 14"><use href="#i-folder"/><path d="M4 8l4-3 5 2-4 2z" fill="#ddd" stroke="#777" stroke-width=".7"/></svg>Ribs</div></li>
                                            <li><div class="row"><svg viewBox="0 0 16 14"><use href="#i-folder"/><path d="M3 5h10v1H3z" fill="#d55"/><path d="M4 6h8l-1 4-3-2-3 2z" fill="#282"/></svg>Member Elastic Foundations</div></li>
                                            <li><div class="row"><svg viewBox="0 0 16 14"><use href="#i-folder"/><path d="M8 2v10" stroke="#d22" stroke-width="2" stroke-dasharray="2 1"/></svg>Member Nonlinearities</div></li>
                                            <li><div class="row"><svg viewBox="0 0 16 14"><use href="#i-folder"/><path d="M4 11l7-7v7L5 8" fill="none" stroke="#a33" stroke-width="1.300"/></svg>Sets of Members</div></li>
                                            <li><div class="row"><svg viewBox="0 0 16 14"><use href="#i-folder"/><path d="M5 5l4-1 3 4-4 3z" fill="#5b9be0" stroke="#124" stroke-width=".7"/></svg>Intersections of Surfaces</div></li>
                                            <li><div class="row"><svg viewBox="0 0 16 14"><use href="#i-folder"/><path d="M4 3h9v9H4zM7 3v9M10 3v9M4 6h9M4 9h9" fill="#7aa5cc" stroke="#456" stroke-width=".7"/></svg>FE Mesh Refinements</div></li>
                                            <li><div class="row"><svg><use href="#i-folder"/></svg>Nodal Releases</div></li>
                                            <li><div class="row"><svg><use href="#i-folder"/></svg>Line Release Types</div></li>
                                            <li><div class="row"><svg viewBox="0 0 16 14"><use href="#i-folder"/><path d="M4 9l3-3 5 1-2 3z" fill="#fff" stroke="#789" stroke-width=".7"/></svg>Line Releases</div></li>
                                            <li><div class="row"><svg viewBox="0 0 16 14"><use href="#i-folder"/><path d="M3 7l3-3 7 0-2 3zM3 10l2-2 8 0-3 3z" fill="#8cc0ee" stroke="#258" stroke-width=".8"/></svg>Surface Release Types</div></li>
                                            <li><div class="row"><svg viewBox="0 0 16 14"><use href="#i-folder"/><path d="M3 7l3-3 7 0-2 3zM3 10l2-2 8 0-3 3z" fill="#8cc0ee" stroke="#258" stroke-width=".8"/></svg>Surface Releases</div></li>
                                            <li><div class="row"><svg><use href="#i-folder"/></svg>Connection of Two Members</div></li>
                                            <li><div class="row"><svg><use href="#i-folder"/></svg>Joints</div></li>
                                            <li><div class="row"><svg viewBox="0 0 16 14"><use href="#i-folder"/><path d="M4 4l8 7M12 4l-8 7" stroke="#222"/><path d="M3 3h3v3H3zM10 3h3v3h-3zM3 9h3v3H3zM10 9h3v3h-3z" fill="#d11"/></svg>Nodal Constraints</div></li>
                                        </ul>
                                    </li>
                                </ul>
                            </li>
                        </ul>
                    </div>
                    <div class="vscroll">
                        <svg viewBox="0 0 12 12"><path d="M2 8l4-4 4 4"/></svg>
                        <span class="thumb"></span>
                        <svg viewBox="0 0 12 12"><path d="M2 4l4 4 4-4"/></svg>
                    </div>
                </div>
                <div class="hscroll">
                    <svg viewBox="0 0 12 12"><path d="M8 2L4 6l4 4"/></svg>
                    <span class="thumb"></span>
                    <svg viewBox="0 0 12 12"><path d="M4 2l4 4-4 4"/></svg>
                </div>
            </div>
            <div class="nav-tabs">
                <button class="tab active"><svg viewBox="0 0 16 16"><path d="M3 1h13v10H3z" fill="#fff" stroke="#3a6fc4"/><path d="M3 0h13v3H3z" fill="#3a6fc4"/><path d="M0 4h5v8H0z" fill="#f1c52a" stroke="#8a6b08"/><circle cx="9" cy="9" r="4" fill="#dcecff" stroke="#35599c" stroke-width="1.500"/><path d="M12 12l3 3" stroke="#b7672e" stroke-width="2.500"/></svg>Data</button>
                <button class="tab"><svg viewBox="0 0 16 16"><path d="M1 4h12v12H1z" fill="#e6eefc" stroke="#26509c" stroke-width="1.500"/><path d="M3 9h8M3 11h8M3 13h8" stroke="#3a6fc4"/><path d="M2 4l6-4h8v4l-6 2-6 1z" fill="#a98064" stroke="#4c3423" stroke-width=".6"/></svg>Display</button>
                <button class="tab"><svg viewBox="0 0 16 16"><path d="M0 13h14v3H0z" fill="#24489c"/><path d="M9 1l4 2v9H2z" fill="#4a78cf" stroke="#24489c"/><path d="M9 5l1 5-4 1z" fill="#dbe8fb"/></svg>Views</button>
            </div>
        </aside>

        <section class="workspace">
            <canvas id="grid"></canvas>
            <svg class="triad" viewBox="90 270 252 192">
                <path d="M186 282l-40 16" stroke="#0f0" stroke-width="5"/>
                <path d="M122 310l22-18 6 12z" fill="#18a018"/>
                <path d="M186 282l80 11" stroke="#f00" stroke-width="5"/>
                <path d="M294 298l-30-12v15z" fill="#c01010"/>
                <path d="M186 282v90" stroke="#00f" stroke-width="5"/>
                <path d="M186 402l-9-34h18z" fill="#0000b8"/>
                <text x="104" y="327" fill="#0f0">Y</text>
                <text x="307" y="311" fill="#f00">X</text>
                <text x="178" y="438" fill="#00f">Z</text>
            </svg>

            <form class="dialog" onsubmit="return false">
                <div class="dialog-title">
                    <h2>Edit Member Eccentricity</h2>
                    <button type="button" aria-label="Close"><svg viewBox="0 0 12 12"><path d="M0 0l12 12M12 0L0 12"/></svg></button>
                </div>

                <div class="dialog-body">
                    <div class="column">
                        <div class="group number">
                            <h3><label for="no">Member Eccentricity <u>N</u>o.</label></h3>
                            <div class="group-body"><input id="no" type="text" value="1" readonly></div>
                        </div>
                        <div class="group offsets">
                            <h3>Absolute Offset</h3>
                            <div class="group-body">
                                <p>Reference system</p>
                                <div class="options">
                                    <label><input type="radio" name="system" checked><span><u>L</u>ocal x,y,z</span></label>
                                    <label><input type="radio" name="system"><span><u>G</u>lobal X,Y,Z</span></label>
                                </div>
                                <hr class="far">
                                <p>Member start i</p>
                                <div class="spinners">
                                    <div class="spin-row"><label for="eix">e<sub>i,x</sub></label><span class="spinner"><input id="eix" type="text" value="10.0"><span class="updown"><button type="button" class="up" aria-label="Up"></button><button type="button" class="down" aria-label="Down"></button></span><button type="button" class="side" aria-label="Pick"></button></span>[mm]</div>
                                    <div class="spin-row"><label for="eiy">e<sub>i,y</sub></label><span class="spinner"><input id="eiy" type="text" value="20.0"><span class="updown"><button type="button" class="up" aria-label="Up"></button><button type="button" class="down" aria-label="Down"></button></span><button type="button" class="side" aria-label="Pick"></button></span>[mm]</div>
                                    <div class="spin-row"><label for="eiz">e<sub>i,z</sub></label><span class="spinner"><input id="eiz" type="text" value="30.0"><span class="updown"><button type="button" class="up" aria-label="Up"></button><button type="button" class="down" aria-label="Down"></button></span><button type="button" class="side" aria-label="Pick"></button></span>[mm]</div>
                                </div>
                                <div class="copy-buttons">
                                    <button type="button" class="icon-button" aria-label="Copy down"><svg viewBox="0 0 20 20"><path d="M3 4h5l2 3 2-3h5l-7 13z" fill="#d42030" stroke="#801018" stroke-width=".6"/><path d="M4 5h3l2 8z" fill="#f79aa0"/></svg></button>
                                    <button type="button" class="icon-button" aria-label="Copy up"><svg viewBox="0 0 20 20"><path d="M3 16h14L10 4z" fill="#d42030" stroke="#801018" stroke-width=".6"/><path d="M7 15l3-4 3 4z" fill="#ffd8da"/></svg></button>
                                </div>
                                <p>Member end j</p>
                                <div class="spinners">
                                    <div class="spin-row"><label for="ejx">e<sub>j,x</sub></label><span class="spinner"><input id="ejx" type="text" value="-10.0"><span class="updown"><button type="button" class="up" aria-label="Up"></button><button type="button" class="down" aria-label="Down"></button></span><button type="button" class="side" aria-label="Pick"></button></span>[mm]</div>
                                    <div class="spin-row"><label for="ejy">e<sub>j,y</sub></label><span class="spinner"><input id="ejy" type="text" value="-20.0"><span class="updown"><button type="button" class="up" aria-label="Up"></button><button type="button" class="down" aria-label="Down"></button></span><button type="button" class="side" aria-label="Pick"></button></span>[mm]</div>
                                    <div class="spin-row"><label for="ejz">e<sub>j,z</sub></label><span class="spinner"><input id="ejz" type="text" value="-30.0"><span class="updown"><button type="button" class="up" aria-label="Up"></button><button type="button" class="down" aria-label="Down"></button></span><button type="button" class="side" aria-label="Pick"></button></span>[mm]</div>
                                </div>
                                <hr class="far">
                                <p>Member hinge location at end node<br>(if the hinge is set)</p>
                                <div class="options checks">
                                    <label><input type="checkbox"><span>Member start</span></label>
                                    <label><input type="checkbox"><span>Member end</span></label>
                                </div>
                            </div>
                        </div>
                    </div>

                    <div class="column relative">
                        <div class="group number"></div>
                        <div class="group offsets">
                            <h3>Relative Offset</h3>
                            <div class="group-body">
                                <p>Cross-section alignment</p>
                                <div class="align-block">
                                    <div class="align-grid">
                                        <input type="radio" name="align" aria-label="Top left"><input type="radio" name="align" aria-label="Top"><input type="radio" name="align" aria-label="Top right">
                                        <input type="radio" name="align" aria-label="Left"><input type="radio" name="align" aria-label="Center" checked><input type="radio" name="align" aria-label="Right">
                                        <input type="radio" name="align" aria-label="Bottom left"><input type="radio" name="align" aria-label="Bottom"><input type="radio" name="align" aria-label="Bottom right">
                                    </div>
                                    <div class="section-view">
                                        <svg viewBox="1024 508 345 252">
                                            <rect x="1024" y="508" width="345" height="252" fill="url(#cream)"/>
                                            <path d="M1124 533h148v13h-50q-17 4-17 22v130q0 18 17 21h50v14h-148v-14h50q16-3 16-21V568q0-18-16-22h-50z" fill="#dcdedf" stroke="#77777c" stroke-width="6"/>
                                            <g fill="#77777c"><circle cx="1124" cy="533" r="7"/><circle cx="1198" cy="533" r="7"/><circle cx="1272" cy="533" r="7"/><circle cx="1124" cy="634" r="7"/><circle cx="1272" cy="634" r="7"/><circle cx="1124" cy="733" r="7"/><circle cx="1198" cy="733" r="7"/><circle cx="1272" cy="733" r="7"/></g>
                                            <path d="M1198 634v50" stroke="#33308c" stroke-width="7"/><path d="M1187 678h22l-11 28z" fill="#33308c"/>
                                            <path d="M1198 634h40" stroke="#0a9f4c" stroke-width="6"/><path d="M1234 624v20l24-10z" fill="#0a9f4c"/>
                                            <circle cx="1198" cy="634" r="8" fill="#e8192c"/>
                                            <text x="1243" y="612" fill="#0a9f4c">y</text><text x="1214" y="703" fill="#33308c">z</text>
                                        </svg>
                                    </div>
                                </div>
                                <hr>
                                <label class="wrap-check"><input type="checkbox"><span>Transverse offset from cross-<br>section of other object</span></label>
                                <div class="object-block">
                                    <fieldset>
                                        <legend>Object:</legend>
                                        <label><input type="radio" name="object" checked disabled><span><u>M</u>ember</span></label>
                                        <label><input type="radio" name="object" disabled><span><u>S</u>urface</span></label>
                                    </fieldset>
                                    <div class="object-no">
                                        <label for="objno">No.</label>
                                        <div class="pick-row">
                                            <select id="objno" disabled><option></option></select>
                                            <button type="button" class="icon-button" aria-label="Pick object" disabled><svg viewBox="0 0 20 20"><path d="M3 3h9v3H9l2 4-3 1z" fill="#8a8a84"/><use href="#cursor" x="9" y="7"/></svg></button>
                                        </div>
                                    </div>
                                </div>
                                <p>Axis offset</p>
                                <div class="align-block">
                                    <div class="align-grid">
                                        <input type="radio" name="axis" aria-label="Top left" disabled><input type="radio" name="axis" aria-label="Top" disabled><input type="radio" name="axis" aria-label="Top right" disabled>
                                        <input type="radio" name="axis" aria-label="Left" disabled><input type="radio" name="axis" aria-label="Center" checked disabled><input type="radio" name="axis" aria-label="Right" disabled>
                                        <input type="radio" name="axis" aria-label="Bottom left" disabled><input type="radio" name="axis" aria-label="Bottom" disabled><input type="radio" name="axis" aria-label="Bottom right" disabled>
                                    </div>
                                    <div class="section-view"></div>
                                </div>
                                <hr>
                                <p>Axial offset from adjoining<br>members at:</p>
                                <div class="options checks">
                                    <label><input type="checkbox"><span>Member start</span></label>
                                    <label><input type="checkbox"><span>Member end</span></label>
                                </div>
                            </div>
                        </div>
                    </div>

                    <div class="column wide">
                        <figure>
                            <figcaption>Absolute Offset</figcaption>
                            <svg viewBox="34 153 996 738">
                                <g fill="#e9ebec" stroke="#5a5575" stroke-width="5" stroke-linejoin="round">
                                    <path d="M447 718l208-73 62 17-150 90z"/>
                                    <path d="M508 565l149-40v120l-149 90z"/>
                                    <path d="M447 718l61-34M508 735l149-90" fill="none"/>
                                    <path d="M447 545l150-91 120 34-150 91z"/>
                                </g>
                                <path d="M318 607L645 357" stroke="#333" stroke-width="2.500" stroke-dasharray="7 8"/>
                                <path d="M385 721L793 476" stroke="#333" stroke-width="2.500" stroke-dasharray="20 7 5 7"/>
                                <g stroke="#222" stroke-width="3" fill="none"><path d="M645 357l58-43 90 26v125M251 656l66-48 68 21v80"/></g>
                                <g fill="#222"><path d="M703 314l-12 16-9-12zM793 340l-22 1 4-13zM793 470l-7-20h14zM300 620l14-12-5 19zM385 629l-22 1 4-13zM385 716l-7-18h14z"/><circle cx="703" cy="314" r="5"/><circle cx="793" cy="340" r="5"/><circle cx="317" cy="608" r="5"/><circle cx="385" cy="629" r="5"/></g>
                                <g stroke="#e8192c" fill="#e8192c" stroke-width="3"><path d="M251 656l40-28M385 721l55-30"/><path d="M300 621l-10 14-7-9zM448 686l-10 12-6-10z"/></g>
                                <g stroke="#0a9f4c" fill="#0a9f4c" stroke-width="3"><path d="M251 656l50 13M385 721l50 18"/><path d="M314 673l-18 2 4-12zM448 744l-18 0 4-11z"/></g>
                                <g stroke="#38318c" fill="#38318c" stroke-width="3"><path d="M251 656v45M385 721v62"/><path d="M251 714l-7-18h14zM385 796l-7-18h14z"/></g>
                                <g fill="#e8192c"><circle cx="645" cy="357" r="8"/><circle cx="793" cy="476" r="8"/><circle cx="251" cy="656" r="8"/><circle cx="385" cy="722" r="8"/></g>
                                <g class="lbl" fill="#333"><text x="634" y="322">e<tspan dy="6" class="small">x</tspan></text><text x="742" y="312">e<tspan dy="6" class="small">y</tspan></text><text x="806" y="404">e<tspan dy="6" class="small">z</tspan></text><text x="236" y="615">e<tspan dy="6" class="small">x</tspan></text><text x="325" y="648">e<tspan dy="6" class="small">y</tspan></text><text x="394" y="670">e<tspan dy="6" class="small">z</tspan></text></g>
                                <g class="lbl" fill="#e8192c"><text x="300" y="659">x</text><text x="441" y="674">x'</text></g>
                                <g class="lbl strong" fill="#e8192c"><text x="667" y="383">j</text><text x="810" y="497">j'</text><text x="219" y="660">i</text><text x="347" y="739">i'</text></g>
                                <g class="lbl" fill="#0a9f4c"><text x="317" y="688">y</text><text x="456" y="765">y'</text></g>
                                <g class="lbl" fill="#38318c"><text x="241" y="745">z</text><text x="373" y="827">z'</text></g>
                            </svg>
                        </figure>
                        <figure>
                            <figcaption>Axial Offset</figcaption>
                            <svg viewBox="34 28 996 738">
                                <g stroke="#333" stroke-width="3" stroke-linejoin="round">
                                    <!-- left column -->
                                    <path d="M297 160l85 10v425l-85-5z" fill="#d9dcdb"/>
                                    <path d="M275 170l50-22v10l-28 12v422l-22 8z" fill="#c3c4c4"/>
                                    <path d="M259 167l50-18h18v8l-52 16-16-4z" fill="#a9a9a9"/>
                                    <path d="M259 168h16v432h-16z" fill="#9a9a9a"/>
                                    <path d="M377 180l49-22v430l-49 20z" fill="#c3c5c4"/>
                                    <!-- beam -->
                                    <path d="M400 315l240 20v165l-240-25z" fill="#d9dcdb"/>
                                    <path d="M377 305l48-14 215 23v25z" fill="#a9a9a9"/>
                                    <path d="M377 302l263 28v18l-263-29zM377 467l263 28v14l-263-30z" fill="#b0b0b0"/>
                                    <path d="M377 462l30-3 233 25v11z" fill="#999"/>
                                    <path d="M319 297l26-7 22 4v24l-48-6zM319 459l26-7 22 4v24l-48-6z" fill="#a9a9a9"/>
                                    <path d="M361 177l50-20h16v5l-50 20v427h-16z" fill="#9a9a9a"/>
                                    <!-- right column -->
                                    <path d="M677 195l85 12v425l-85-5z" fill="#d9dcdb"/>
                                    <path d="M656 205l50-22v10l-29 12v421l-21 8z" fill="#c3c4c4"/>
                                    <path d="M640 202l50-18h16v8l-50 16v426h-16z" fill="#9a9a9a"/>
                                    <path d="M656 326l67 6v20l-25 1-42-8zM656 488l67 6v20l-25 1-42-8z" fill="#a9a9a9"/>
                                    <path d="M698 341l25-9M698 341v12M698 503l25-9M698 503v12" fill="none"/>
                                    <path d="M758 214l49-22v433l-49 20z" fill="#c3c5c4"/>
                                    <path d="M740 211l50-19h17v3l-49 19v431h-18z" fill="#9a9a9a"/>
                                </g>
                                <path d="M514 382v30l25-13z" fill="#6a6a6a"/>
                            </svg>
                        </figure>
                        <div class="group comment">
                            <h3><label for="comment"><u>C</u>omment</label></h3>
                            <div class="group-body">
                                <select id="comment"><option>eccentricity 1</option></select>
                                <button type="button" class="icon-button focus" aria-label="Comment library"><svg viewBox="0 0 20 20"><path d="M1 3h13v8H1z" fill="#d8cc96" stroke="#6f6644"/><path d="M3 6h13v8H3z" fill="#d8cc96" stroke="#6f6644"/><path d="M6 8h13v9H6z" fill="#c9bd85" stroke="#5f5738"/><path d="M14 11h4v4h-4z" fill="#fff" stroke="#554"/></svg></button>
                            </div>
                        </div>
                    </div>
                </div>

                <div class="dialog-footer">
                    <button type="button" class="icon-button" aria-label="Help"><svg viewBox="0 0 20 20"><path d="M3 19l2-5 5 3z" fill="#888"/><circle cx="10" cy="9.500" r="8" fill="#e9edf5" stroke="#888" stroke-width="2"/><path d="M7 7c0-5 7-4 6 0 0 2-3 2-3 5M10 13.500v2" fill="none" stroke="#2c3f88" stroke-width="2.200"/></svg></button>
                    <button type="button" class="icon-button" aria-label="Edit"><svg viewBox="0 0 20 20"><path d="M1 1h13v18H1z" fill="#f8f8f8" stroke="#777"/><path d="M3 5h9M3 8h8M3 11h6M3 14h5" stroke="#999"/><path d="M17 2l3 2-9 11-4 2 1-5z" fill="#f6d21d" stroke="#5c4a05"/><path d="M17 1l3 2-2 3-3-2z" fill="#e99ac6"/><path d="M7 17l1-3 2 2z" fill="#111"/></svg></button>
                    <button type="button" class="icon-button" aria-label="Units"><svg viewBox="0 0 20 20"><path d="M0 0h20v6H0z" fill="#79c66c" stroke="#3d8a36" stroke-width=".6"/><path d="M3 4v2M7 4v2M11 4v2M15 4v2" stroke="#2e6b29"/><text x="0" y="16" class="unit-txt">0.<tspan fill="#2c3f88">00</tspan></text><path d="M8 18.500h12" stroke="#2c3f88" stroke-width="1.500"/></svg></button>
                    <button type="submit" class="push default">OK</button>
                    <button type="button" class="push">Cancel</button>
                </div>
            </form>
        </section>
    </main>

    <footer class="statusbar">
        <span class="message"></span>
        <button class="flag snap">SNAP</button>
        <button class="flag grid">GRID</button>
        <button class="flag cartes">CARTES</button>
        <button class="flag osnap">OSNAP</button>
        <button class="flag glines">GLINES</button>
        <button class="flag dxf">DXF</button>
        <span class="pane first"></span>
        <span class="pane second"></span>
        <span class="pane"></span>
        <span class="pane"></span>
        <span class="pane last"></span>
    </footer>

    <script src="grid.js"></script>
</body>

</html>
```
FILE: styles.css
```css
* {
    box-sizing: border-box;
}

body {
    margin: 0;
    height: 100vh;
    display: flex;
    flex-direction: column;
    overflow: hidden;
    border-top: 1px solid #9c8a50;
    border-bottom: 1px solid #444;
    background-color: #d0d4dd;
    font-family: "Open Sans", "Noto Sans", sans-serif;
    font-size: 14px;
    color: #000;
}

button,
input,
select {
    font: inherit;
    color: inherit;
    margin: 0;
}

button {
    border: 0;
    padding: 0;
    background: none;
}

h1,
h2,
h3,
p,
ul,
figure {
    margin: 0;
    padding: 0;
    font-weight: normal;
}

svg {
    display: block;
    flex: none;
}

u {
    text-underline-offset: 2px;
}

.sprite {
    position: absolute;
    width: 0;
    height: 0;
}

.ico-txt {
    font: bold 8px "Liberation Serif", serif;
    fill: #777;
}

.unit-txt {
    font: italic bold 11px "Liberation Serif", serif;
    fill: #222;
}

/* Title bar */
.titlebar {
    flex: none;
    height: 37px;
    display: flex;
    align-items: center;
    padding-left: 8px;
    background-color: #fff;
}

.app-icon {
    width: 20px;
    height: 20px;
}

.titlebar h1 {
    margin-left: 6px;
    font-size: 14px;
    color: #999;
}

.win-buttons {
    display: flex;
    margin-left: auto;
    padding-right: 3px;
}

.win-buttons button {
    width: 58px;
    height: 36px;
    display: flex;
    align-items: center;
    justify-content: center;
}

.win-buttons svg {
    width: 12px;
    height: 12px;
    fill: none;
    stroke: #888;
}

/* Menu */
.menubar {
    flex: none;
    height: 30px;
    display: flex;
    align-items: center;
    color: #4a4f5e;
    font-size: 13px;
}

.grip {
    flex: none;
    width: 10px;
    height: 16px;
    background: radial-gradient(circle, #a2a6b0 1px, transparent 1px) 2px 0 / 5px 4px repeat-y;
}

.menu-logo {
    width: 20px;
    height: 18px;
    margin-right: 4px;
}

.menubar button {
    padding: 0 8px 0 7px;
}

.mdi-buttons {
    display: flex;
    gap: 9px;
    margin-left: auto;
    padding: 6px 7px 0 0;
}

.mdi-buttons svg {
    width: 12px;
    height: 12px;
    fill: none;
    stroke: #666;
}

/* Toolbars */
.toolbars {
    flex: none;
    height: 64px;
}

.toolbar-row {
    display: flex;
    gap: 2px;
    height: 32px;
}

.toolbar {
    display: flex;
    align-items: center;
    background: linear-gradient(#eaeef8, #d2d7e2);
    border-bottom: 1px solid #a2a6b0;
    border-radius: 0 4px 4px 0;
}

.tool {
    flex: none;
    width: 28px;
    height: 28px;
    padding: 4px;
    border-radius: 2px;
}

.tool svg {
    width: 20px;
    height: 20px;
}

.tool.active {
    padding: 3px;
    border: 1px solid #8f8a80;
    background: linear-gradient(#f8c88c, #fcae4c 45%, #fde08e);
}

.drop {
    flex: none;
    width: 15px;
    height: 28px;
}

.drop::before {
    content: "";
    display: block;
    margin: 0 auto;
    width: 0;
    border: 4px solid transparent;
    border-top-color: #777;
    border-bottom: 0;
}

.sep {
    flex: none;
    width: 2px;
    height: 18px;
    margin: 0 3px;
    border-left: 1px solid #a9adb8;
    border-right: 1px solid #fff;
}

select {
    appearance: none;
    border-radius: 0;
    padding: 0;
}

.load-case {
    width: 216px;
    height: 22px;
    margin: 0 2px;
    border: 1px solid #a0a0a0;
    background: #efefef url("data:image/svg+xml,%3Csvg xmlns='http://www.w3.org/2000/svg' width='8' height='4'%3E%3Cpath d='M0 0h7L3.5 4z' fill='%23777'/%3E%3C/svg%3E") no-repeat right 4px center;
}

/* Main area */
.main {
    flex: 1;
    min-height: 0;
    display: flex;
}

.navigator {
    flex: none;
    width: 401px;
    display: flex;
    flex-direction: column;
}

.nav-header {
    flex: none;
    display: flex;
    align-items: center;
    gap: 7px;
    height: 30px;
    padding: 0 5px 2px 4px;
    background-color: #b9bfca;
    color: #444;
}

.nav-header h2 {
    font-size: 13px;
    margin-right: auto;
}

.nav-header svg {
    width: 12px;
    height: 12px;
    fill: none;
    stroke: #777;
}

.nav-frame {
    flex: 1;
    min-height: 0;
    display: flex;
    flex-direction: column;
    padding: 1px 3px 2px 1px;
    margin-left: 1px;
    border: 1px solid #8c929f;
    border-width: 0 1px 1px 0;
    background-color: #f0f2fb;
}

.nav-view {
    flex: 1;
    min-height: 0;
    display: flex;
    border: 1px solid #888;
    border-width: 1px 0 0 1px;
    background-color: #fcfcf4;
}

.tree {
    flex: 1;
    min-width: 0;
    overflow: hidden;
    padding: 1px 0 0 3px;
    line-height: 22px;
}

.tree ul {
    list-style: none;
}

.tree li {
    position: relative;
    padding-left: 19px;
}

/* dotted guide lines */
.tree li::before {
    content: "";
    position: absolute;
    left: 9px;
    top: 0;
    bottom: 0;
    border-left: 1px dotted #888;
}

.tree li:last-child:not(.more)::before {
    bottom: auto;
    height: 11px;
}

.tree li::after {
    content: "";
    position: absolute;
    left: 10px;
    top: 11px;
    width: 10px;
    border-top: 1px dotted #888;
}

.row {
    display: flex;
    align-items: center;
    height: 22px;
    white-space: nowrap;
}

.row svg {
    width: 16px;
    height: 14px;
    margin: 0 4px 0 2px;
}

.row.bold {
    font-size: 15px;
    font-weight: bold;
}

.row.bold svg,
.items svg {
    height: 16px;
}

.items .row {
    color: #4a45ee;
}

.toggle {
    position: absolute;
    z-index: 1;
    left: 4px;
    top: 6px;
    width: 11px;
    height: 11px;
    border: 1px solid #8a8a8a;
    border-radius: 2px;
    background: linear-gradient(#3a5aa8, #3a5aa8) center / 7px 1px no-repeat, #f4f4f4;
}

.toggle.plus {
    background: linear-gradient(#3a5aa8, #3a5aa8) center / 7px 1px no-repeat, linear-gradient(#3a5aa8, #3a5aa8) center / 1px 7px no-repeat, #f4f4f4;
}

.vscroll {
    flex: none;
    width: 20px;
    display: flex;
    flex-direction: column;
    align-items: center;
    background-color: #f0f0f0;
}

.vscroll svg,
.hscroll svg {
    width: 12px;
    height: 12px;
    margin: 5px;
    fill: none;
    stroke: #555;
    stroke-width: 2;
}

.thumb {
    background-color: #cdcdcd;
}

.vscroll .thumb {
    width: 19px;
    height: 30%;
    margin-bottom: auto;
}

.hscroll {
    flex: none;
    height: 21px;
    display: flex;
    align-items: center;
    padding-right: 20px;
    background-color: #f0f0f0;
}

.hscroll .thumb {
    width: 158px;
    height: 19px;
    margin: 0 auto 0 2px;
}

.nav-tabs {
    flex: none;
    display: flex;
    height: 29px;
    padding-left: 4px;
    color: #4a4f5e;
    font-size: 13px;
}

.tab {
    display: flex;
    align-items: center;
    gap: 2px;
    height: 26px;
    padding: 0 4px 0 3px;
    margin-right: 5px;
}

.tab svg {
    width: 16px;
    height: 16px;
}

.tab.active {
    padding-left: 1px;
    background-color: #eef1f8;
    border-right: 1px solid #999;
    border-bottom: 1px solid #999;
    border-radius: 0 0 4px 4px;
}

/* Work area */
.workspace {
    position: relative;
    flex: 1;
    min-width: 0;
    margin: 0 2px 1px 5px;
    border: 1px solid #666;
    border-width: 1px 0 0 1px;
    background-color: #fff;
}

.workspace canvas {
    display: block;
    width: 100%;
    height: 100%;
}

.triad {
    position: absolute;
    left: 23px;
    bottom: 67px;
    width: 84px;
    height: 64px;
    font: 27px "Liberation Sans", sans-serif;
}

/* Dialog */
.dialog {
    position: absolute;
    left: 189px;
    top: 66px;
    width: 807px;
    border: 1px solid #666;
    background-color: #f0f0f0;
    box-shadow: 3px 5px 16px rgba(0, 0, 0, 0.4);
    font-family: "DejaVu Sans Condensed", "DejaVu Sans", sans-serif;
    font-size: 13px;
    line-height: 16px;
}

.dialog-title {
    display: flex;
    align-items: center;
    justify-content: space-between;
    height: 31px;
    padding: 0 15px 1px 3px;
    background-color: #fff;
}

.dialog-title h2 {
    font: 14px "Open Sans", "Noto Sans", sans-serif;
}

.dialog-title svg {
    width: 12px;
    height: 12px;
    fill: none;
    stroke: #000;
}

.dialog-body {
    display: flex;
    gap: 8px;
    margin: 10px 8px 0 9px;
}

.column {
    flex: none;
    width: 219px;
    display: flex;
    flex-direction: column;
    gap: 12px;
}

.column.wide {
    flex: 1;
    margin-left: 1px;
}

.group {
    position: relative;
    border: 1px solid #a5a5ee;
    border-width: 0 1px 1px 0;
    box-shadow: inset 1px 1px #d7e3f6;
    background-color: #f0f4fa;
    clip-path: polygon(0 0, calc(100% - 12px) 0, 100% 12px, 100% 100%, 0 100%);
}

.group:empty {
    clip-path: none;
}

.group.number,
.group.comment {
    height: 56px;
}

.group h3 {
    height: 19px;
    margin-right: -1px;
    padding-left: 3px;
    border-bottom: 1px solid #fff;
    background-color: #dce6f4;
    color: #1f4a7c;
    font: 14px/18px "Liberation Sans", Arial, sans-serif;
}

.group-body {
    padding: 0 6px 4px 3px;
}

.relative .group-body {
    padding-left: 4px;
    padding-right: 4px;
}

#no {
    display: block;
    width: 53px;
    height: 24px;
    margin-top: 5px;
    padding: 0 5px;
    border: 1px solid #7a7a7a;
    background-color: #f0f0f0;
}

.offsets .group-body {
    padding-top: 9px;
    padding-bottom: 5px;
}

hr {
    margin: 10px 0 9px;
    height: 2px;
    border: 0;
    border-top: 1px solid #a0a0a0;
    background-color: #fff;
}

hr.far {
    margin-top: 14px;
}

.options {
    margin-top: 2px;
}

.options label,
fieldset label {
    display: flex;
    align-items: center;
    gap: 3px;
    height: 24px;
}

.options + hr.far {
    margin-top: 13px;
}

.checks {
    margin-top: 4px;
}

input[type="radio"],
input[type="checkbox"] {
    appearance: none;
    flex: none;
    width: 16px;
    height: 16px;
    border: 1px solid #333;
    background-color: #fff;
}

input[type="radio"] {
    border-radius: 50%;
}

input[type="radio"]:checked {
    background: radial-gradient(circle, #333 5px, #fff 6px);
}

input[type="radio"]:disabled {
    border-color: #ccc;
}

input[type="radio"]:checked:disabled {
    background: radial-gradient(circle, #ccc 5px, #fff 6px);
}

.spinners {
    display: flex;
    flex-direction: column;
    gap: 4px;
    margin-top: 5px;
}

.spin-row {
    display: flex;
    align-items: center;
    height: 24px;
}

.spin-row label {
    width: 35px;
    padding-top: 3px;
    font-size: 12px;
}

.spin-row sub {
    font-size: 11px;
    line-height: 0;
}

.spinner {
    display: flex;
    width: 96px;
    height: 24px;
    margin-right: 8px;
    padding: 1px;
    gap: 1px;
    border: 1px solid #7a96b8;
    background-color: #fff;
}

.spinner input {
    flex: 1;
    min-width: 0;
    padding: 0 4px 0 0;
    border: 0;
    text-align: right;
}

.updown {
    display: flex;
    flex-direction: column;
    width: 16px;
}

.spinner button {
    flex: 1;
    display: flex;
    align-items: center;
    justify-content: center;
    border: 1px solid #adadad;
    background-color: #e4e4e4;
}

.spinner .side {
    flex: none;
    width: 11px;
}

.spinner button::before {
    content: "";
    border: 4px solid transparent;
}

.spinner .up::before {
    border-top: 0;
    border-bottom-color: #000;
}

.spinner .down::before {
    border-bottom: 0;
    border-top-color: #000;
}

.spinner .side::before {
    border-right: 0;
    border-left-color: #000;
}

.copy-buttons {
    display: flex;
    gap: 5px;
    margin: 21px 0 22px 43px;
}

.icon-button {
    display: flex;
    align-items: center;
    justify-content: center;
    width: 30px;
    height: 26px;
    border: 1px solid #adadad;
    background-color: #e1e1e1;
}

.icon-button svg {
    width: 20px;
    height: 20px;
}

.copy-buttons svg {
    width: 16px;
    height: 16px;
}

.icon-button:disabled {
    border-color: #bfbfbf;
    background-color: #ccc;
}

.icon-button.focus {
    border: 2px solid #0078d7;
}

.align-block {
    display: flex;
    justify-content: space-between;
    height: 84px;
    margin-top: 5px;
}

.align-grid {
    display: grid;
    grid-template-columns: repeat(3, 14px);
    grid-auto-rows: 14px;
    gap: 12px 10px;
    padding-top: 2px;
}

.align-grid input[type="radio"] {
    width: 14px;
    height: 14px;
}

.align-grid input[type="radio"]:checked {
    background: radial-gradient(circle, #333 4px, #fff 5px);
}

.align-grid input[type="radio"]:checked:disabled {
    background: radial-gradient(circle, #ccc 4px, #fff 5px);
}

.section-view {
    width: 116px;
    border: 1px solid #a0a0a0;
    border-right-color: #fff;
    border-bottom-color: #fff;
}

.section-view svg {
    width: 100%;
    height: 100%;
    font: bold 45px "Liberation Sans", sans-serif;
}

.wrap-check {
    display: flex;
    gap: 3px;
    white-space: nowrap;
}

.wrap-check input {
    margin-top: 1px;
}

.object-block {
    display: flex;
    margin: 16px 0 20px;
}

fieldset {
    width: 103px;
    margin: 0;
    padding: 0;
    border: 0;
    color: #777;
}

legend {
    padding: 0 0 2px;
    color: #000;
}

.object-no label {
    display: block;
}

.pick-row {
    display: flex;
    align-items: center;
    gap: 7px;
    margin-top: 4px;
}

#objno {
    width: 61px;
    height: 24px;
    border: 1px solid #ccc;
    background: linear-gradient(#f0f0f0, #f0f0f0) 2px 2px / 34px 18px no-repeat, url("data:image/svg+xml,%3Csvg xmlns='http://www.w3.org/2000/svg' width='10' height='6'%3E%3Cpath d='M.5.5L5 5 9.500.5' fill='none' stroke='%23aaa'/%3E%3C/svg%3E") no-repeat right 5px center, #fff;
}

/* Pictures */
figure {
    position: relative;
    height: 246px;
    border: 1px solid #a0a0a0;
    border-right-color: #fff;
    border-bottom-color: #fff;
    background: linear-gradient(70deg, #fff 15%, #fffdf2 45%, #fdf5dc 95%);
    font-family: "Liberation Sans", Arial, sans-serif;
}

figure svg {
    width: 100%;
    height: 100%;
}

figcaption {
    position: absolute;
    left: 2px;
    top: 1px;
    font-size: 14px;
}

.lbl {
    font-size: 42px;
}

.lbl .small {
    font-size: 36px;
}

.lbl.strong {
    font-size: 45px;
    font-weight: bold;
}

.comment .group-body {
    display: flex;
    align-items: center;
    gap: 4px;
    padding: 5px 3px 0;
}

#comment {
    flex: 1;
    height: 24px;
    margin-bottom: 2px;
    padding: 0 5px 2px;
    border: 1px solid #777;
    background: #fff url("data:image/svg+xml,%3Csvg xmlns='http://www.w3.org/2000/svg' width='10' height='6'%3E%3Cpath d='M.5.5L5 5 9.500.5' fill='none' stroke='%23444'/%3E%3C/svg%3E") no-repeat right 5px center;
}

.dialog-footer {
    display: flex;
    gap: 10px;
    margin: 10px 9px 0;
    padding: 13px 0 11px 1px;
    border-top: 1px solid #a0a0a0;
    box-shadow: inset 0 1px #fff;
}

.push {
    width: 86px;
    height: 26px;
    border: 1px solid #adadad;
    background-color: #e1e1e1;
}

.push.default {
    margin-left: auto;
    border: 2px solid #0078d7;
}

/* Status bar */
.statusbar {
    flex: none;
    display: flex;
    gap: 2px;
    height: 28px;
    padding-top: 2px;
    background: linear-gradient(#e2e5ec, #b5bac6 30%, #a6abb5 60%, #bcc0ca);
    border-top: 1px solid #9a9fb5;
    font-family: "Liberation Sans", Arial, sans-serif;
    font-size: 13px;
    color: #333;
}

.message {
    flex: 1;
}

.flag {
    flex: none;
    height: 25px;
    padding: 0 0 5px 1px;
    border: 1px solid #111;
    border-right-color: #fff;
    border-bottom-color: #fff;
    text-align: left;
}

.snap {
    width: 42px;
}

.grid {
    width: 40px;
}

.cartes {
    width: 64px;
    padding-left: 6px;
}

.osnap,
.glines {
    width: 53px;
}

.dxf {
    width: 33px;
}

.pane {
    width: 72px;
    border-left: 1px solid #8d929e;
}

.pane.first {
    width: 187px;
}

.pane.second {
    width: 86px;
}

.pane.last {
    width: 95px;
    background: radial-gradient(circle, #666 1px, transparent 1px) right bottom / 4px 4px no-repeat, radial-gradient(circle, #666 1px, transparent 1px) right 4px bottom / 4px 4px no-repeat, radial-gradient(circle, #666 1px, transparent 1px) right bottom 4px / 4px 4px no-repeat;
}
```
FILE: grid.js
```js
// Work plane grid: ten points per cell, thin lines on the cell borders
const canvas = document.getElementById('grid');
const ctx = canvas.getContext('2d');

const origin = { x: 593, y: 847 };
const stepX = { x: 283.2, y: 42.5 };
const stepY = { x: 163.6, y: -73.4 };

function point(a, b) {
    return {
        x: origin.x + a * stepX.x + b * stepY.x,
        y: origin.y + a * stepX.y + b * stepY.y
    };
}

function line(from, to, color) {
    ctx.strokeStyle = color;
    ctx.beginPath();
    ctx.moveTo(from.x, from.y);
    ctx.lineTo(to.x, to.y);
    ctx.stroke();
}

function drawGrid() {
    canvas.width = canvas.clientWidth;
    canvas.height = canvas.clientHeight;

    // plane area
    const corners = [point(-12, 0), point(8, 0), point(8, 16), point(-12, 16)];
    ctx.fillStyle = '#fcfcfc';
    ctx.beginPath();
    corners.forEach((p) => ctx.lineTo(p.x, p.y));
    ctx.fill();

    for (let b = 0; b <= 16; b++) {
        line(point(-12, b), point(8, b), b === 5 ? '#008080' : '#c4c4c4');
    }
    for (let a = -12; a <= 8; a++) {
        line(point(a, 0), point(a, 16), a === -3 ? '#008080' : '#c4c4c4');
    }

    ctx.fillStyle = '#000';
    for (let i = -120; i <= 80; i++) {
        for (let j = 0; j <= 160; j++) {
            const p = point(i / 10, j / 10);
            ctx.fillRect(Math.round(p.x), Math.round(p.y), 1, 1);
        }
    }
}

drawGrid();
window.addEventListener('resize', drawGrid);
```
